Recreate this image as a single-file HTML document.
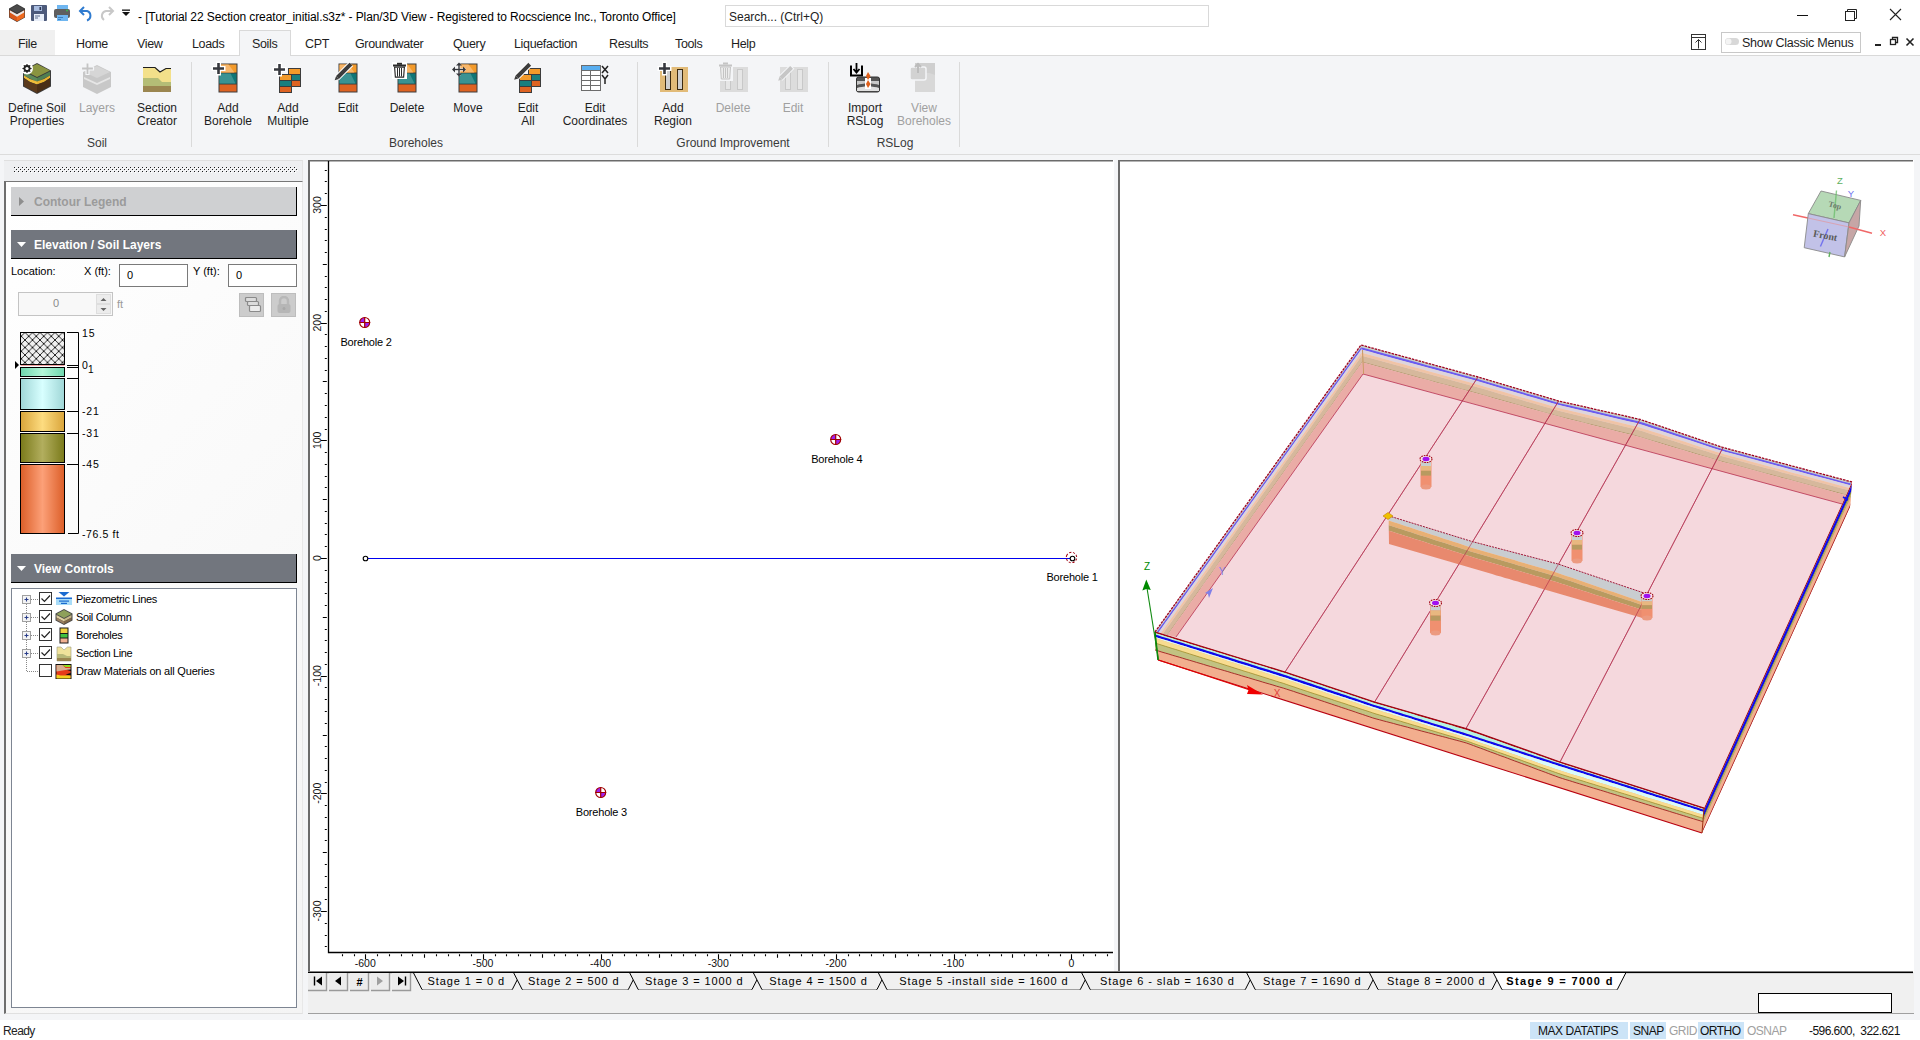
<!DOCTYPE html>
<html><head><meta charset="utf-8">
<style>
*{margin:0;padding:0;box-sizing:border-box}
html,body{width:1920px;height:1040px;overflow:hidden;background:#f4f5f7;font-family:"Liberation Sans",sans-serif;color:#1e1e1e}
.a{position:absolute}
.t{position:absolute;white-space:nowrap;line-height:1}
#title{left:0;top:0;width:1920px;height:30px;background:#fff}
#menu{left:0;top:30px;width:1920px;height:26px;background:#fff;border-bottom:1px solid #d9d9d9}
.mt{position:absolute;top:8px;font-size:12.5px;letter-spacing:-0.35px;color:#1e1e1e;white-space:nowrap;line-height:1}
#ribbon{left:0;top:56px;width:1920px;height:99px;background:#f4f5f7;border-bottom:1px solid #dcdcdc}
.rb{position:absolute;font-size:12px;color:#1e1e1e;text-align:center;line-height:13px;white-space:nowrap}
.rb.dis{color:#a0a0a0}
.gl{position:absolute;top:81px;font-size:12px;color:#3a3a3a;line-height:1;white-space:nowrap}
.sep{position:absolute;top:6px;width:1px;height:86px;background:#dcdcdc}
</style></head><body>

<!-- TITLE BAR -->
<div id="title" class="a">
 <svg class="a" style="left:0;top:0" width="140" height="30">
  <!-- app icon -->
  <path d="M17 4 L25 8.5 L25 17.5 L17 22 L9 17.5 L9 8.5Z" fill="#3a3a3a"/>
  <path d="M9.5 10 L17 14.5 L17 21.5 L9.5 17.2Z" fill="#d9581a"/>
  <path d="M24.5 10 L17 14.5 L17 21.5 L24.5 17.2Z" fill="#ef6a1e"/>
  <path d="M10 10.5 L17 14.2 L24 10.5 L24 12.5 L17 16.8 L10 12.5Z" fill="#e8e8e8"/>
  <path d="M17 5 L24 9 L17 13 L10 9Z" fill="#4a4a4a"/>
  <!-- save -->
  <rect x="31" y="5" width="16" height="16" rx="1" fill="#4d5a7a"/>
  <rect x="34" y="6" width="8" height="5" fill="#a9bde0"/>
  <rect x="39.5" y="7" width="1.6" height="3" fill="#2e3650"/>
  <rect x="34" y="14" width="10" height="7" fill="#e8eef8"/>
  <rect x="35" y="15.5" width="5" height="1" fill="#5a6a8a"/><rect x="35" y="17.5" width="3" height="1" fill="#5a6a8a"/>
  <!-- print -->
  <rect x="57" y="5" width="11" height="4" fill="#6fb6f0"/>
  <rect x="54" y="9" width="16" height="9" rx="2" fill="#5e5e5e"/>
  <circle cx="67" cy="10.5" r="0.9" fill="#35c04a"/>
  <rect x="57" y="15" width="11" height="6" fill="#6fb6f0"/>
  <rect x="58" y="17" width="5" height="1" fill="#3d7fc0"/><rect x="58" y="19" width="3" height="1" fill="#3d7fc0"/>
  <!-- undo -->
  <path d="M84 7 L80 11 L84 15" fill="none" stroke="#2f7bd0" stroke-width="2"/>
  <path d="M80.5 11 H87 A5 5 0 0 1 87 20.5" fill="none" stroke="#2f7bd0" stroke-width="2"/>
  <!-- redo -->
  <path d="M109 7 L113 11 L109 15" fill="none" stroke="#c8c8c8" stroke-width="2"/>
  <path d="M112.5 11 H106 A5 5 0 0 0 104 20" fill="none" stroke="#c8c8c8" stroke-width="2"/>
  <!-- dropdown -->
  <rect x="122" y="9.5" width="8" height="1.3" fill="#111"/>
  <path d="M122 12 H130 L126 16Z" fill="#111"/>
 </svg>
 <div class="t" style="left:138px;top:11px;font-size:12px;letter-spacing:-0.1px;color:#000">- [Tutorial 22 Section creator_initial.s3z* - Plan/3D View - Registered to Rocscience Inc., Toronto Office]</div>
 <div class="a" style="left:725px;top:5px;width:484px;height:22px;border:1px solid #d9d9d9;background:#fff"></div>
 <div class="t" style="left:729px;top:11px;font-size:12px;color:#222">Search... (Ctrl+Q)</div>
 <svg class="a" style="left:1780px;top:0" width="140" height="30">
  <rect x="17" y="15" width="11" height="1" fill="#111"/>
  <rect x="65.5" y="11.5" width="9" height="9" fill="none" stroke="#222" stroke-width="1"/>
  <path d="M67.5 11.5v-2h9v9h-2" fill="none" stroke="#222" stroke-width="1"/>
  <path d="M110 9l11 11M121 9l-11 11" stroke="#222" stroke-width="1.1"/>
 </svg>
</div>

<!-- MENU -->
<div id="menu" class="a">
  <div class="a" style="left:0;top:0;width:55px;height:25px;background:#f0f0f0"></div>
  <div class="a" style="left:239px;top:0;width:52px;height:26px;background:#f4f5f7;border:1px solid #d9d9d9;border-bottom:none"></div>
  <div class="mt" style="left:18px">File</div>
  <div class="mt" style="left:76px">Home</div>
  <div class="mt" style="left:137px">View</div>
  <div class="mt" style="left:192px">Loads</div>
  <div class="mt" style="left:252px">Soils</div>
  <div class="mt" style="left:305px">CPT</div>
  <div class="mt" style="left:355px">Groundwater</div>
  <div class="mt" style="left:453px">Query</div>
  <div class="mt" style="left:514px">Liquefaction</div>
  <div class="mt" style="left:609px">Results</div>
  <div class="mt" style="left:675px">Tools</div>
  <div class="mt" style="left:731px">Help</div>
  <div class="a" style="left:1721px;top:2px;width:140px;height:21px;border:1px solid #c8c8c8;background:#fff"></div>
  <div class="mt" style="left:1742px;top:7px;letter-spacing:-0.25px">Show Classic Menus</div>
  <svg class="a" style="left:1680px;top:0" width="240" height="26">
   <rect x="11.5" y="4.5" width="14" height="15" fill="none" stroke="#333" stroke-width="1"/>
   <path d="M11.5 7.5h14" stroke="#333" stroke-width="1"/>
   <path d="M18.5 18.5v-9M15.5 12.5l3 -3l3 3" fill="none" stroke="#333" stroke-width="1"/>
   <rect x="45" y="8" width="14" height="7" rx="3.5" fill="#d8d8d8"/>
   <circle cx="48.5" cy="11.5" r="3" fill="#f4f4f4"/>
   <rect x="195" y="14" width="6" height="2" fill="#222"/>
   <rect x="210.5" y="9.5" width="5" height="5" fill="none" stroke="#222" stroke-width="1.3"/>
   <path d="M212.5 9.5v-2h5v5h-2" fill="none" stroke="#222" stroke-width="1.3"/>
   <path d="M226.5 8.5l7 7M233.5 8.5l-7 7" stroke="#222" stroke-width="1.6"/>
  </svg>
</div>

<!-- RIBBON -->
<div id="ribbon" class="a">
<svg class="a" style="left:0;top:0" width="1000" height="99" viewBox="0 56 1000 99">
 <defs>
  <g id="col">
   <rect x="0.5" y="0.5" width="19" height="29" fill="#3c3c3c"/>
   <rect x="1.5" y="1.5" width="17" height="8" fill="#f39a2a"/>
   <path d="M1.5 1.5h9l6 8h-15z" fill="#f7b66a"/>
   <rect x="1.5" y="10.5" width="17" height="10" fill="#0f7676"/>
   <path d="M1.5 10.5h11l5 10h-16z" fill="#3b9292"/>
   <rect x="1.5" y="21.5" width="17" height="7" fill="#de6322"/>
  </g>
  <g id="colsm">
   <rect x="0" y="0" width="13" height="19" fill="#3c3c3c"/>
   <rect x="1" y="1" width="11" height="5" fill="#f39a2a"/>
   <rect x="1" y="7" width="11" height="5" fill="#1a7e7e"/>
   <rect x="1" y="13" width="11" height="5" fill="#de6322"/>
  </g>
  <g id="plus">
   <path d="M-2.5 -7h5v4.5h4.5v5h-4.5v4.5h-5v-4.5h-4.5v-5h4.5z" fill="#fff"/>
   <path d="M-1.3 -5.5h2.6v4.2h4.2v2.6h-4.2v4.2h-2.6v-4.2h-4.2v-2.6h4.2z" fill="#36383e"/>
  </g>
 </defs>
 <!-- Define Soil Properties -->
 <g>
  <path d="M23 70.5 L37 63 L51 70.5 L51 86.5 L37 94 L23 86.5Z" fill="#3b3b3b"/>
  <path d="M24 70.5 L37 64 L50 70.5 L37 77Z" fill="#8a9440"/>
  <path d="M24 71.5 L37 78 L37 82 L24 75.5Z" fill="#5d8a5a"/>
  <path d="M50 71.5 L37 78 L37 82 L50 75.5Z" fill="#4f7f52"/>
  <path d="M24 75.5 L30 79 L37 81.5 L37 84.5 L30 82 L24 78Z" fill="#efbe3a"/>
  <path d="M50 75.5 L44 79 L37 81.5 L37 84.5 L44 82 L50 78Z" fill="#e8b430"/>
  <path d="M24 78 L30 82 L37 84.5 L37 93 L24 86Z" fill="#5a3a1c"/>
  <path d="M50 78 L44 82 L37 84.5 L37 93 L50 86Z" fill="#4a2e16"/>
  <circle cx="27" cy="68.5" r="6" fill="#fff"/><path d="M30.12 67.80 L31.57 67.95 L31.57 69.05 L30.12 69.20 L29.70 70.21 L30.62 71.34 L29.84 72.12 L28.71 71.20 L27.70 71.62 L27.55 73.07 L26.45 73.07 L26.30 71.62 L25.29 71.20 L24.16 72.12 L23.38 71.34 L24.30 70.21 L23.88 69.20 L22.43 69.05 L22.43 67.95 L23.88 67.80 L24.30 66.79 L23.38 65.66 L24.16 64.88 L25.29 65.80 L26.30 65.38 L26.45 63.93 L27.55 63.93 L27.70 65.38 L28.71 65.80 L29.84 64.88 L30.62 65.66 L29.70 66.79Z" fill="#222"/><circle cx="27" cy="68.5" r="3.4" fill="#222"/><circle cx="27" cy="68.5" r="1.6" fill="#fff"/>
 </g>
 <!-- Layers (disabled) -->
 <g opacity="1">
  <path d="M83 72 L97 65 L111 72 L111 87 L97 94 L83 87Z" fill="#c8c8c8"/>
  <path d="M84 72 L97 66 L110 72 L97 78Z" fill="#d6d6d6"/>
  <path d="M84 77 L97 83 L97 85 L84 79Z M110 77 L97 83 L97 85 L110 79Z" fill="#e6e6e6"/>
  <path d="M86 63h3v4h4.5v3h-4.5v4.5h-3v-4.5h-4.5v-3h4.5z" fill="#c4c4c4" stroke="#f4f5f7" stroke-width="1.2"/>
 </g>
 <!-- Section Creator -->
 <g>
  <path d="M143 67 L155 67 L160 72 L166 68 L171 68 L171 92 L143 92Z" fill="#f3e08a"/>
  <path d="M143 78 L158 78 L162 82 L171 82 L171 86 L143 86Z" fill="#b4bd76"/>
  <rect x="143" y="86" width="28" height="6" fill="#9b8650"/>
  <path d="M143 67.5 L155 67.5 L160 72 L166 68.5 L171 68.5" fill="none" stroke="#1e1e1e" stroke-width="1.2"/>
 </g>
 <!-- Add Borehole -->
 <use href="#col" x="218" y="63"/>
 <use href="#plus" x="218.5" y="68.5"/>
 <!-- Add Multiple -->
 <use href="#colsm" x="288" y="68"/>
 <use href="#colsm" x="279" y="74"/>
 <use href="#plus" x="279.5" y="69.5"/>
 <!-- Edit -->
 <use href="#col" x="338" y="63"/>
 <g transform="translate(337.5,77.5) rotate(-45)">
  <path d="M-1 -3h20v6h-20z" fill="#fff"/>
  <path d="M0 -2h16v4h-16z M16 -2l3 0l0 4l-3 0z" fill="#3c3c3c"/>
  <path d="M-4 0 L0 -2 L0 2Z" fill="#3c3c3c"/>
 </g>
 <!-- Delete -->
 <use href="#col" x="397" y="63"/>
 <g>
  <rect x="392" y="62" width="15" height="17" fill="#fff"/>
  <rect x="393" y="64.5" width="13" height="2" fill="#2c2c2c"/>
  <rect x="397" y="62.8" width="5" height="2" fill="#2c2c2c"/>
  <path d="M394.6 67.2h9.8l-0.8 10h-8.2z" fill="#fff" stroke="#2c2c2c" stroke-width="1.2"/>
  <path d="M397.5 68v8.5M399.5 68v8.5M401.5 68v8.5" stroke="#2c2c2c" stroke-width="1"/>
 </g>
 <!-- Move -->
 <use href="#col" x="458" y="63"/>
 <g fill="#fff" stroke="#fff" stroke-width="2.5"><path d="M459 63v13M452.5 69.5h13"/></g>
 <g fill="#36383e"><path d="M459 62.5l-3 3h6z M459 76.5l-3 -3h6z M452 69.5l3 -3v6z M466 69.5l-3 -3v6z"/><rect x="458.3" y="64" width="1.4" height="11"/><rect x="453.5" y="68.8" width="11" height="1.4"/></g>
 <!-- Edit All -->
 <use href="#colsm" x="528" y="68"/>
 <use href="#colsm" x="519" y="74"/>
 <g transform="translate(517,77) rotate(-45)">
  <path d="M-1 -3h19v6h-19z" fill="#fff"/>
  <path d="M0 -2h15v4h-15z M15 -2h3v4h-3z" fill="#3c3c3c"/>
  <path d="M-4 0 L0 -2 L0 2Z" fill="#3c3c3c"/>
 </g>
 <!-- Edit Coordinates -->
 <g>
  <rect x="581.5" y="65.5" width="19" height="25" fill="#fff" stroke="#6c6c6c" stroke-width="1"/>
  <rect x="582" y="66" width="18" height="4.5" fill="#58aef0"/>
  <path d="M582 70.5h18M582 75.5h18M582 80.5h18M582 85.5h18M590.5 71v19" stroke="#6c6c6c" stroke-width="1"/>
  <path d="M602 66l6 7M608 66l-6 7M602 75l3 4l3 -4M605 79v5" stroke="#222" stroke-width="1.5" fill="none"/>
 </g>
 <!-- Add Region -->
 <g>
  <rect x="660" y="67" width="28" height="25" fill="#e2bb78"/>
  <rect x="665.5" y="69.5" width="5" height="20" fill="#cfcfcf" stroke="#3c2a10" stroke-width="1"/>
  <rect x="677.5" y="69.5" width="5" height="20" fill="#cfcfcf" stroke="#3c2a10" stroke-width="1"/>
  <use href="#plus" x="664.5" y="68.5"/>
 </g>
 <!-- Delete dis -->
 <g>
  <rect x="720" y="67" width="28" height="25" fill="#dcdcdc"/>
  <rect x="725.5" y="69.5" width="5" height="20" fill="#e6e6e6" stroke="#c8c8c8" stroke-width="1"/>
  <rect x="737.5" y="69.5" width="5" height="20" fill="#e6e6e6" stroke="#c8c8c8" stroke-width="1"/>
  <rect x="718" y="62" width="15" height="19" fill="#f4f5f7"/>
  <rect x="719" y="64.5" width="13" height="2" fill="#c4c4c4"/>
  <rect x="723" y="62.5" width="5" height="2" fill="#c4c4c4"/>
  <path d="M720.5 67h10l-0.8 12h-8.4z" fill="#ececec" stroke="#c4c4c4" stroke-width="1"/>
  <path d="M723.5 68v10M725.5 68v10M727.5 68v10" stroke="#c4c4c4" stroke-width="1"/>
 </g>
 <!-- Edit dis -->
 <g>
  <rect x="780" y="67" width="28" height="25" fill="#dcdcdc"/>
  <rect x="785.5" y="69.5" width="5" height="20" fill="#e6e6e6" stroke="#c8c8c8" stroke-width="1"/>
  <rect x="797.5" y="69.5" width="5" height="20" fill="#e6e6e6" stroke="#c8c8c8" stroke-width="1"/>
  <g transform="translate(781,78) rotate(-45)"><path d="M-1 -3h17v6h-17z" fill="#f4f5f7"/><path d="M0 -2h15v4h-15z" fill="#c6c6c6"/><path d="M-4 0L0 -2L0 2Z" fill="#c6c6c6"/></g>
 </g>
 <!-- Import RSLog -->
 <g>
  <path d="M851 65.5v10h11v-10" fill="none" stroke="#000" stroke-width="2"/>
  <path d="M856.5 63v9M853.5 69l3 3.5l3 -3.5" fill="none" stroke="#000" stroke-width="1.8"/>
  <rect x="856.5" y="77" width="23" height="15" rx="2" fill="#555" stroke="#333"/>
  <path d="M857 81h22v4c-5 -2 -17 -2 -22 0z" fill="#c8c8c8"/>
  <path d="M857 88c5 -2 17 -2 22 0v3h-22z" fill="#e0e0e0"/>
  <rect x="865" y="78" width="6" height="11" fill="#fff"/>
  <path d="M868 72l2.5 4l-2.5 4l2.5 4l-2.5 4l-2 -4l2 -4l-2 -4z" fill="#e0601a"/>
 </g>
 <!-- View Boreholes dis -->
 <g>
  <rect x="915" y="63" width="20" height="29" fill="#d8d8d8"/>
  <path d="M915 63h20v12l-6 -2h-14z" fill="#cfcfcf"/>
  <rect x="910" y="67" width="16" height="13" rx="2" fill="#d2d2d2" stroke="#f4f5f7" stroke-width="1.5"/>
  <path d="M918 63v10M915 67l3 -3l3 3" stroke="#bcbcbc" stroke-width="2" fill="none"/>
 </g>
 <!-- separators -->
 <rect x="191" y="62" width="1" height="85" fill="#dadada"/>
 <rect x="637" y="62" width="1" height="85" fill="#dadada"/>
 <rect x="828" y="62" width="1" height="85" fill="#dadada"/>
 <rect x="959" y="62" width="1" height="85" fill="#dadada"/>
</svg>
 <div class="rb" style="left:37px;top:46px;transform:translateX(-50%)">Define Soil<br>Properties</div>
 <div class="rb dis" style="left:97px;top:46px;transform:translateX(-50%)">Layers</div>
 <div class="rb" style="left:157px;top:46px;transform:translateX(-50%)">Section<br>Creator</div>
 <div class="rb" style="left:228px;top:46px;transform:translateX(-50%)">Add<br>Borehole</div>
 <div class="rb" style="left:288px;top:46px;transform:translateX(-50%)">Add<br>Multiple</div>
 <div class="rb" style="left:348px;top:46px;transform:translateX(-50%)">Edit</div>
 <div class="rb" style="left:407px;top:46px;transform:translateX(-50%)">Delete</div>
 <div class="rb" style="left:468px;top:46px;transform:translateX(-50%)">Move</div>
 <div class="rb" style="left:528px;top:46px;transform:translateX(-50%)">Edit<br>All</div>
 <div class="rb" style="left:595px;top:46px;transform:translateX(-50%)">Edit<br>Coordinates</div>
 <div class="rb" style="left:673px;top:46px;transform:translateX(-50%)">Add<br>Region</div>
 <div class="rb dis" style="left:733px;top:46px;transform:translateX(-50%)">Delete</div>
 <div class="rb dis" style="left:793px;top:46px;transform:translateX(-50%)">Edit</div>
 <div class="rb" style="left:865px;top:46px;transform:translateX(-50%)">Import<br>RSLog</div>
 <div class="rb dis" style="left:924px;top:46px;transform:translateX(-50%)">View<br>Boreholes</div>
 <div class="gl" style="left:97px;transform:translateX(-50%)">Soil</div>
 <div class="gl" style="left:416px;transform:translateX(-50%)">Boreholes</div>
 <div class="gl" style="left:733px;transform:translateX(-50%)">Ground Improvement</div>
 <div class="gl" style="left:895px;transform:translateX(-50%)">RSLog</div>
</div>

<!-- LEFT PANEL -->
<div class="a" style="left:4px;top:160px;width:299px;height:21px;background:#eeeff1;border-top:1px solid #dfdfdf;border-right:1px solid #e4e4e4"></div>
<svg class="a" style="left:14px;top:167px" width="284" height="6">
 <defs><pattern id="dots" width="4" height="4" patternUnits="userSpaceOnUse"><rect x="1" y="1" width="1" height="1" fill="#fff"/><rect x="3" y="3" width="1" height="1" fill="#fff"/><rect x="0" y="0" width="1" height="1" fill="#1e1e1e"/><rect x="2" y="2" width="1" height="1" fill="#1e1e1e"/></pattern></defs>
 <rect x="0" y="0" width="284" height="6" fill="url(#dots)"/>
</svg>
<div class="a" style="left:4px;top:181px;width:299px;height:833px;background:linear-gradient(135deg,#ffffff 0%,#f4f4f4 100%);border-left:2px solid #6e6e6e;border-top:1px solid #777;border-bottom:1px solid #e0e0e0;border-right:1px solid #e8e8e8"></div>
<!-- contour legend header -->
<div class="a" style="left:11px;top:187px;width:286px;height:29px;background:#cfd0d2;border-right:1px solid #000;border-bottom:1px solid #000"></div>
<svg class="a" style="left:19px;top:197px" width="6" height="10"><path d="M0 0L5 4.5L0 9Z" fill="#8e8e8e"/></svg>
<div class="t" style="left:34px;top:196px;font-size:12px;font-weight:bold;color:#9b9b9b">Contour Legend</div>
<!-- elevation header -->
<div class="a" style="left:11px;top:230px;width:286px;height:29px;background:#72767e;border-right:1px solid #000;border-bottom:1px solid #000"></div>
<svg class="a" style="left:17px;top:242px" width="10" height="6"><path d="M0 0H9L4.5 5Z" fill="#fff"/></svg>
<div class="t" style="left:34px;top:239px;font-size:12px;font-weight:bold;color:#fff">Elevation / Soil Layers</div>
<div class="t" style="left:11px;top:266px;font-size:11px;color:#000">Location:</div>
<div class="t" style="left:84px;top:266px;font-size:11px;color:#000">X (ft):</div>
<div class="a" style="left:119px;top:264px;width:69px;height:23px;background:#fff;border:1px solid #7a7a7a"></div>
<div class="t" style="left:127px;top:270px;font-size:11px;color:#000">0</div>
<div class="t" style="left:193px;top:266px;font-size:11px;color:#000">Y (ft):</div>
<div class="a" style="left:228px;top:264px;width:69px;height:23px;background:#fff;border:1px solid #7a7a7a"></div>
<div class="t" style="left:236px;top:270px;font-size:11px;color:#000">0</div>
<div class="a" style="left:18px;top:292px;width:95px;height:24px;background:#f8f8f8;border:1px solid #c4c4c4"></div>
<div class="t" style="left:53px;top:298px;font-size:11px;color:#8a8a8a">0</div>
<div class="a" style="left:96px;top:294px;width:15px;height:10px;background:#ececec;border:1px solid #dedede"></div>
<div class="a" style="left:96px;top:304px;width:15px;height:10px;background:#ececec;border:1px solid #dedede"></div>
<svg class="a" style="left:100px;top:297px" width="8" height="16"><path d="M0.5 4H6.5L3.5 1Z M0.5 11H6.5L3.5 14Z" fill="#666"/></svg>
<div class="t" style="left:117px;top:299px;font-size:11px;color:#9a9a9a">ft</div>
<div class="a" style="left:239px;top:293px;width:25px;height:24px;background:#cccccc;border:1px solid #bdbdbd"></div>
<svg class="a" style="left:242px;top:296px" width="20" height="18">
 <g fill="#dcdcdc" stroke="#8a8a8a" stroke-width="1.2">
  <rect x="3.5" y="1.5" width="11" height="4" rx="1"/><rect x="5.5" y="5.5" width="11" height="4" rx="1"/><rect x="7.5" y="9.5" width="11" height="6" rx="1" fill="#ececec"/>
 </g>
</svg>
<div class="a" style="left:271px;top:293px;width:25px;height:24px;background:#cccccc;border:1px solid #bdbdbd"></div>
<svg class="a" style="left:274px;top:296px" width="20" height="18">
 <path d="M6 8V5a4 4 0 0 1 8 0v3" fill="none" stroke="#b8b8b8" stroke-width="2.5"/>
 <rect x="3.5" y="8" width="13" height="9" rx="2" fill="#b6b6b6"/>
 <circle cx="10" cy="12.5" r="1.5" fill="#a8a8a8"/>
</svg>
<!-- soil column -->
<svg class="a" style="left:10px;top:325px" width="130" height="220">
 <defs>
  <pattern id="hatch" width="7.5" height="7.5" patternUnits="userSpaceOnUse" x="0" y="0">
   <rect width="7.5" height="7.5" fill="#f0f0f0"/>
   <path d="M0 0L7.5 7.5M7.5 0L0 7.5" stroke="#111" stroke-width="0.9"/>
  </pattern>
  <linearGradient id="gGreen" x1="0" x2="1"><stop offset="0" stop-color="#6fd6ae"/><stop offset="0.5" stop-color="#b4f6d8"/><stop offset="1" stop-color="#6fd6ae"/></linearGradient>
  <linearGradient id="gCyan" x1="0" x2="1"><stop offset="0" stop-color="#9fd6d6"/><stop offset="0.5" stop-color="#d8ffff"/><stop offset="1" stop-color="#9fd6d6"/></linearGradient>
  <linearGradient id="gYel" x1="0" x2="1"><stop offset="0" stop-color="#d9a43a"/><stop offset="0.5" stop-color="#fddc80"/><stop offset="1" stop-color="#d9a43a"/></linearGradient>
  <linearGradient id="gOl" x1="0" x2="1"><stop offset="0" stop-color="#7a7a1a"/><stop offset="0.5" stop-color="#b2ae5e"/><stop offset="1" stop-color="#7a7a1a"/></linearGradient>
  <linearGradient id="gOr" x1="0" x2="1"><stop offset="0" stop-color="#dc5e28"/><stop offset="0.5" stop-color="#fca078"/><stop offset="1" stop-color="#dc5e28"/></linearGradient>
 </defs>
 <rect x="10.5" y="7.5" width="44" height="32" fill="url(#hatch)" stroke="#000" stroke-width="1"/>
 <rect x="10.5" y="40" width="44" height="1" fill="#f4a0a0"/>
 <rect x="10.5" y="42.5" width="44" height="9" fill="url(#gGreen)" stroke="#000" stroke-width="1"/>
 <rect x="10.5" y="53.5" width="44" height="31" fill="url(#gCyan)" stroke="#000" stroke-width="1"/>
 <rect x="10.5" y="86.5" width="44" height="20" fill="url(#gYel)" stroke="#000" stroke-width="1"/>
 <rect x="10.5" y="108.5" width="44" height="29" fill="url(#gOl)" stroke="#000" stroke-width="1"/>
 <rect x="10.5" y="139.5" width="44" height="69" fill="url(#gOr)" stroke="#000" stroke-width="1"/>
 <path d="M57 7.5H68.5V208.5H58M57 40.5H68.5M57 42.5H68.5M57 53.5H68.5M57 86.5H68.5M57 108.5H68.5M57 139.5H68.5" fill="none" stroke="#000" stroke-width="1"/>
 <path d="M5 36L9 40L5 44Z" fill="#000"/>
 <g font-family="Liberation Sans" font-size="10.5" fill="#000">
  <text x="72" y="11.5" letter-spacing="0.8">15</text>
  <text x="72" y="44" >0</text><text x="78" y="47.5" font-size="10">1</text>
  <text x="72" y="90" letter-spacing="0.8">-21</text>
  <text x="72" y="112" letter-spacing="0.8">-31</text>
  <text x="72" y="143" letter-spacing="0.8">-45</text>
  <text x="72" y="212.5" letter-spacing="0.6">-76.5 ft</text>
 </g>
</svg>
<!-- view controls -->
<div class="a" style="left:11px;top:554px;width:286px;height:29px;background:#72767e;border-right:1px solid #000;border-bottom:1px solid #000"></div>
<svg class="a" style="left:17px;top:566px" width="10" height="6"><path d="M0 0H9L4.5 5Z" fill="#fff"/></svg>
<div class="t" style="left:34px;top:563px;font-size:12px;font-weight:bold;color:#fff">View Controls</div>
<div class="a" style="left:11px;top:588px;width:286px;height:420px;background:#fff;border:1px solid #7d8592"></div>
<svg class="a" style="left:11px;top:588px" width="286" height="100">
 <g stroke="#888" stroke-width="1" stroke-dasharray="1 1" fill="none">
  <path d="M15.5 16V83.5H28"/>
  <path d="M20 11.5H28M20 29.5H28M20 47.5H28M20 65.5H28"/>
 </g>
 <g>
  <rect x="11.5" y="7.5" width="8" height="8" fill="#f4f4f4" stroke="#a0a0a0"/>
  <rect x="11.5" y="25.5" width="8" height="8" fill="#f4f4f4" stroke="#a0a0a0"/>
  <rect x="11.5" y="43.5" width="8" height="8" fill="#f4f4f4" stroke="#a0a0a0"/>
  <rect x="11.5" y="61.5" width="8" height="8" fill="#f4f4f4" stroke="#a0a0a0"/>
  <path d="M13.5 11.5h4M15.5 9.5v4M13.5 29.5h4M15.5 27.5v4M13.5 47.5h4M15.5 45.5v4M13.5 65.5h4M15.5 63.5v4" stroke="#2a3e8a" stroke-width="1.1"/>
 </g>
 <g fill="#fff" stroke="#333" stroke-width="1">
  <rect x="28.5" y="4.5" width="12" height="12"/><rect x="28.5" y="22.5" width="12" height="12"/><rect x="28.5" y="40.5" width="12" height="12"/><rect x="28.5" y="58.5" width="12" height="12"/><rect x="28.5" y="76.5" width="12" height="12"/>
 </g>
 <g fill="none" stroke="#222" stroke-width="1.2">
  <path d="M30.5 10.5l3 3l5.5 -6M30.5 28.5l3 3l5.5 -6M30.5 46.5l3 3l5.5 -6M30.5 64.5l3 3l5.5 -6"/>
 </g>
 <!-- icons -->
 <rect x="45" y="11" width="16" height="6" fill="#a8dcf8"/>
 <path d="M47.5 4h11l-5.5 4.5z" fill="#1a6ad0"/>
 <rect x="45" y="9.5" width="16" height="1.5" fill="#1a6ad0"/><rect x="48" y="12.5" width="10" height="1.2" fill="#1a6ad0"/><rect x="50" y="14.8" width="6" height="1.2" fill="#1a6ad0"/>
 <path d="M53 21L61.5 25.5V32.5L53 37L44.5 32.5V25.5Z" fill="#4a4a4a"/>
 <path d="M53 22L60.5 26L53 30L45.5 26Z" fill="#8ea05a"/>
 <path d="M45.5 27L53 31V33.5L45.5 29.5Z" fill="#e0d0a0"/><path d="M60.5 27L53 31V33.5L60.5 29.5Z" fill="#c8b888"/>
 <path d="M45.5 29.5L53 33.5V36L45.5 32Z" fill="#9a8060"/><path d="M60.5 29.5L53 33.5V36L60.5 32Z" fill="#806848"/>
 <rect x="48.5" y="39.5" width="9" height="16" fill="#1a1a1a"/>
 <rect x="49.5" y="40.5" width="7" height="4.5" fill="#f0d040"/><rect x="49.5" y="46" width="7" height="3.5" fill="#40c040"/><rect x="49.5" y="50.5" width="7" height="4" fill="#f0b090"/>
 <path d="M46 59L50 59L53 62L56.5 59L60 59L60 73L46 73Z" fill="#f0e29a" stroke="#9a9a80" stroke-width="0.6"/>
 <path d="M46 66L52 66L56 68L60 68L60 73L46 73Z" fill="#b8b878"/><rect x="46" y="70" width="14" height="3" fill="#9b8650"/>
 <rect x="44.5" y="76" width="16" height="15" fill="#111"/>
 <path d="M45.5 77h14v3l-5 1.5l5 1.5v2l-5 1.5l5 1v2.5h-14z" fill="#e63a1a"/>
 <path d="M45.5 77h6l3 3h5v1.5l-5 0.5l-9 1.5z" fill="#d8b090"/>
 <path d="M51.5 77h8v2h-5z" fill="#90e020"/>
 <path d="M45.5 86.5l4 1h10v3h-14z" fill="#f0d020"/>
</svg>
<div class="t" style="left:76px;top:594px;font-size:11px;letter-spacing:-0.35px;color:#000">Piezometric Lines</div>
<div class="t" style="left:76px;top:612px;font-size:11px;letter-spacing:-0.35px;color:#000">Soil Column</div>
<div class="t" style="left:76px;top:630px;font-size:11px;letter-spacing:-0.35px;color:#000">Boreholes</div>
<div class="t" style="left:76px;top:648px;font-size:11px;letter-spacing:-0.35px;color:#000">Section Line</div>
<div class="t" style="left:76px;top:666px;font-size:11px;letter-spacing:-0.2px;color:#000">Draw Materials on all Queries</div>

<!-- PLAN VIEW -->
<svg class="a" style="left:308px;top:160px" width="806" height="812" viewBox="308 160 806 812">
<rect x="308" y="160" width="806" height="812" fill="#fff"/>
<rect x="308" y="160" width="805" height="1.5" fill="#6b6b6b"/>
<rect x="308" y="160" width="2" height="811" fill="#6b6b6b"/>
<path d="M328.5 161V952.5H1113" fill="none" stroke="#000" stroke-width="1.3"/>
<path d="M324.8 946.5H326.8M324.8 935.5H326.8M324.8 923.5H326.8M320.8 911.5H326.8M324.8 899.5H326.8M324.8 887.5H326.8M324.8 876.5H326.8M324.8 864.5H326.8M322.8 852.5H326.8M324.8 840.5H326.8M324.8 829.5H326.8M324.8 817.5H326.8M324.8 805.5H326.8M320.8 793.5H326.8M324.8 782.5H326.8M324.8 770.5H326.8M324.8 758.5H326.8M324.8 746.5H326.8M322.8 735.5H326.8M324.8 723.5H326.8M324.8 711.5H326.8M324.8 699.5H326.8M324.8 687.5H326.8M320.8 676.5H326.8M324.8 664.5H326.8M324.8 652.5H326.8M324.8 640.5H326.8M324.8 629.5H326.8M322.8 617.5H326.8M324.8 605.5H326.8M324.8 593.5H326.8M324.8 582.5H326.8M324.8 570.5H326.8M320.8 558.5H326.8M324.8 546.5H326.8M324.8 534.5H326.8M324.8 523.5H326.8M324.8 511.5H326.8M322.8 499.5H326.8M324.8 487.5H326.8M324.8 476.5H326.8M324.8 464.5H326.8M324.8 452.5H326.8M320.8 440.5H326.8M324.8 429.5H326.8M324.8 417.5H326.8M324.8 405.5H326.8M324.8 393.5H326.8M322.8 381.5H326.8M324.8 370.5H326.8M324.8 358.5H326.8M324.8 346.5H326.8M324.8 334.5H326.8M320.8 323.5H326.8M324.8 311.5H326.8M324.8 299.5H326.8M324.8 287.5H326.8M324.8 276.5H326.8M322.8 264.5H326.8M324.8 252.5H326.8M324.8 240.5H326.8M324.8 229.5H326.8M324.8 217.5H326.8M320.8 205.5H326.8M324.8 193.5H326.8M324.8 181.5H326.8M324.8 170.5H326.8M342.5 954.2V956.2M354.5 954.2V956.2M365.5 954.2V959.2M377.5 954.2V956.2M389.5 954.2V956.2M401.5 954.2V956.2M412.5 954.2V956.2M424.5 954.2V957.7M436.5 954.2V956.2M448.5 954.2V956.2M459.5 954.2V956.2M471.5 954.2V956.2M483.5 954.2V959.2M495.5 954.2V956.2M506.5 954.2V956.2M518.5 954.2V956.2M530.5 954.2V956.2M542.5 954.2V957.7M554.5 954.2V956.2M565.5 954.2V956.2M577.5 954.2V956.2M589.5 954.2V956.2M601.5 954.2V959.2M612.5 954.2V956.2M624.5 954.2V956.2M636.5 954.2V956.2M648.5 954.2V956.2M659.5 954.2V957.7M671.5 954.2V956.2M683.5 954.2V956.2M695.5 954.2V956.2M707.5 954.2V956.2M718.5 954.2V959.2M730.5 954.2V956.2M742.5 954.2V956.2M754.5 954.2V956.2M765.5 954.2V956.2M777.5 954.2V957.7M789.5 954.2V956.2M801.5 954.2V956.2M812.5 954.2V956.2M824.5 954.2V956.2M836.5 954.2V959.2M848.5 954.2V956.2M859.5 954.2V956.2M871.5 954.2V956.2M883.5 954.2V956.2M895.5 954.2V957.7M907.5 954.2V956.2M918.5 954.2V956.2M930.5 954.2V956.2M942.5 954.2V956.2M954.5 954.2V959.2M965.5 954.2V956.2M977.5 954.2V956.2M989.5 954.2V956.2M1001.5 954.2V956.2M1012.5 954.2V957.7M1024.5 954.2V956.2M1036.5 954.2V956.2M1048.5 954.2V956.2M1060.5 954.2V956.2M1071.5 954.2V959.2M1083.5 954.2V956.2M1095.5 954.2V956.2M1107.5 954.2V956.2" stroke="#000" stroke-width="1.1"/>
<g font-family="Liberation Sans" font-size="10.5" fill="#111"><text x="365.3" y="967" text-anchor="middle">-600</text><text x="482.9" y="967" text-anchor="middle">-500</text><text x="600.6" y="967" text-anchor="middle">-400</text><text x="718.3" y="967" text-anchor="middle">-300</text><text x="836.0" y="967" text-anchor="middle">-200</text><text x="953.6" y="967" text-anchor="middle">-100</text><text x="1071.3" y="967" text-anchor="middle">0</text><text x="0" y="0" text-anchor="middle" transform="translate(320.5 205.0) rotate(-90)">300</text><text x="0" y="0" text-anchor="middle" transform="translate(320.5 322.7) rotate(-90)">200</text><text x="0" y="0" text-anchor="middle" transform="translate(320.5 440.3) rotate(-90)">100</text><text x="0" y="0" text-anchor="middle" transform="translate(320.5 558.0) rotate(-90)">0</text><text x="0" y="0" text-anchor="middle" transform="translate(320.5 675.7) rotate(-90)">-100</text><text x="0" y="0" text-anchor="middle" transform="translate(320.5 793.3) rotate(-90)">-200</text><text x="0" y="0" text-anchor="middle" transform="translate(320.5 911.0) rotate(-90)">-300</text></g>
<path d="M367.5 558.5H1070" stroke="#0000f0" stroke-width="1.1"/>
<circle cx="1071.5" cy="557.5" r="5.2" fill="none" stroke="#a00010" stroke-width="1" stroke-dasharray="2.2 1.6" transform="rotate(200 1071.5 557.5)"/>
<circle cx="365.5" cy="558.5" r="2.3" fill="#fff" stroke="#000" stroke-width="1.1"/>
<circle cx="1072.5" cy="558.5" r="2.3" fill="#fff" stroke="#000" stroke-width="1.1"/>
<g transform="translate(364.7 322.5)"><path d="M0 0V-5A5 5 0 0 0 -5 0Z M0 0V5A5 5 0 0 0 5 0Z" fill="#a020f0"/><circle r="5" fill="none" stroke="#a00000" stroke-width="1.15"/><path d="M-5.5 0H5.5M0 -5.5V5.5" stroke="#a00000" stroke-width="1.2"/></g>
<g transform="translate(835.7 439.5)"><path d="M0 0V-5A5 5 0 0 0 -5 0Z M0 0V5A5 5 0 0 0 5 0Z" fill="#a020f0"/><circle r="5" fill="none" stroke="#a00000" stroke-width="1.15"/><path d="M-5.5 0H5.5M0 -5.5V5.5" stroke="#a00000" stroke-width="1.2"/></g>
<g transform="translate(600.7 792.5)"><path d="M0 0V-5A5 5 0 0 0 -5 0Z M0 0V5A5 5 0 0 0 5 0Z" fill="#a020f0"/><circle r="5" fill="none" stroke="#a00000" stroke-width="1.15"/><path d="M-5.5 0H5.5M0 -5.5V5.5" stroke="#a00000" stroke-width="1.2"/></g>
<g font-family="Liberation Sans" font-size="11" letter-spacing="-0.2" fill="#000"><text x="366.1" y="345.7" text-anchor="middle">Borehole 2</text><text x="836.8" y="463.3" text-anchor="middle">Borehole 4</text><text x="601.4" y="816.3" text-anchor="middle">Borehole 3</text><text x="1072.1" y="581.0" text-anchor="middle">Borehole 1</text></g>
</svg>
<!-- /PLAN VIEW -->
<!-- 3D VIEW -->
<svg class="a" style="left:1118px;top:160px" width="796" height="812" viewBox="1118 160 796 812">
<rect x="1118" y="160" width="796" height="812" fill="#fff"/>
<rect x="1118" y="160" width="795" height="1.5" fill="#6b6b6b"/>
<rect x="1118" y="160" width="2" height="811" fill="#6b6b6b"/>
<polygon points="1361.0,345.0 1478.0,377.0 1558.6,401.0 1640.0,419.4 1723.0,447.5 1852.0,482.0 1704.0,808.0 1155.0,632.0" fill="#f5d8dd"/>
<polygon points="1361.0,345.0 1369.3,347.3 1377.7,349.6 1386.0,351.8 1394.4,354.1 1402.7,356.4 1411.0,358.7 1419.4,361.0 1427.7,363.2 1436.0,365.5 1444.4,367.8 1452.7,370.1 1461.1,372.4 1469.4,374.6 1477.7,376.9 1486.0,379.4 1494.3,381.9 1502.6,384.3 1510.9,386.8 1519.2,389.3 1527.4,391.7 1535.7,394.2 1544.0,396.7 1552.3,399.1 1560.6,401.5 1569.0,403.4 1577.5,405.3 1585.9,407.2 1594.3,409.1 1602.8,411.0 1611.2,412.9 1619.6,414.8 1628.1,416.7 1636.5,418.6 1644.8,421.0 1653.0,423.8 1661.2,426.6 1669.4,429.3 1677.5,432.1 1685.7,434.9 1693.9,437.7 1702.1,440.4 1710.3,443.2 1718.5,446.0 1726.7,448.5 1735.1,450.7 1743.4,453.0 1751.8,455.2 1760.1,457.4 1768.5,459.7 1776.8,461.9 1785.2,464.1 1793.5,466.4 1801.9,468.6 1810.2,470.8 1818.6,473.1 1826.9,475.3 1835.3,477.5 1843.6,479.8 1852.0,482.0 1851.2,483.8 1842.9,481.5 1834.5,479.3 1826.2,477.1 1817.9,474.8 1809.5,472.6 1801.2,470.4 1792.9,468.1 1784.5,465.9 1776.2,463.7 1767.9,461.5 1759.5,459.2 1751.2,457.0 1742.9,454.8 1734.5,452.5 1726.2,450.3 1718.0,447.8 1709.8,445.1 1701.6,442.3 1693.4,439.6 1685.2,436.9 1677.1,434.2 1668.9,431.4 1660.7,428.7 1652.5,426.0 1644.3,423.3 1636.1,420.9 1627.6,418.9 1619.2,417.0 1610.8,415.1 1602.4,413.1 1594.0,411.2 1585.6,409.3 1577.2,407.3 1568.8,405.4 1560.4,403.5 1552.1,401.2 1543.8,398.7 1535.5,396.3 1527.3,393.8 1519.0,391.4 1510.7,388.9 1502.5,386.5 1494.2,384.0 1485.9,381.6 1477.6,379.2 1469.3,376.9 1461.0,374.6 1452.7,372.3 1444.4,370.1 1436.0,367.8 1427.7,365.5 1419.4,363.2 1411.1,361.0 1402.8,358.7 1394.4,356.4 1386.1,354.1 1377.8,351.9 1369.5,349.6 1361.2,347.3" fill="#c6d0c8"/>
<polygon points="1361.2,347.2 1369.5,349.4 1377.8,351.7 1386.1,354.0 1394.4,356.3 1402.8,358.5 1411.1,360.8 1419.4,363.1 1427.7,365.4 1436.0,367.6 1444.4,369.9 1452.7,372.2 1461.0,374.5 1469.3,376.7 1477.7,379.0 1485.9,381.5 1494.2,383.9 1502.5,386.4 1510.7,388.8 1519.0,391.3 1527.3,393.7 1535.6,396.1 1543.8,398.6 1552.1,401.0 1560.4,403.4 1568.8,405.3 1577.2,407.2 1585.6,409.1 1594.0,411.1 1602.4,413.0 1610.9,414.9 1619.3,416.9 1627.7,418.8 1636.1,420.7 1644.4,423.1 1652.5,425.8 1660.7,428.6 1668.9,431.3 1677.1,434.0 1685.3,436.8 1693.5,439.5 1701.6,442.2 1709.8,444.9 1718.0,447.7 1726.2,450.2 1734.6,452.4 1742.9,454.6 1751.2,456.9 1759.6,459.1 1767.9,461.3 1776.2,463.6 1784.6,465.8 1792.9,468.0 1801.2,470.3 1809.6,472.5 1817.9,474.7 1826.2,477.0 1834.6,479.2 1842.9,481.4 1851.2,483.6 1850.4,485.5 1842.1,483.3 1833.8,481.1 1825.5,478.8 1817.1,476.6 1808.8,474.4 1800.5,472.1 1792.2,469.9 1783.9,467.7 1775.6,465.5 1767.3,463.2 1759.0,461.0 1750.6,458.8 1742.3,456.5 1734.0,454.3 1725.7,452.1 1717.5,449.6 1709.3,446.9 1701.1,444.3 1692.9,441.6 1684.8,438.9 1676.6,436.2 1668.4,433.5 1660.2,430.8 1652.0,428.2 1643.9,425.5 1635.6,423.1 1627.2,421.2 1618.8,419.2 1610.5,417.2 1602.1,415.3 1593.7,413.3 1585.3,411.4 1576.9,409.4 1568.6,407.5 1560.2,405.5 1551.9,403.2 1543.6,400.8 1535.4,398.4 1527.1,395.9 1518.9,393.5 1510.6,391.1 1502.3,388.7 1494.1,386.2 1485.8,383.8 1477.6,381.4 1469.3,379.1 1461.0,376.9 1452.7,374.6 1444.3,372.3 1436.0,370.1 1427.7,367.8 1419.4,365.5 1411.1,363.2 1402.8,361.0 1394.5,358.7 1386.2,356.4 1377.9,354.2 1369.6,351.9 1361.3,349.6" fill="#6a5cf0"/>
<polygon points="1361.3,349.4 1369.6,351.6 1377.9,353.9 1386.2,356.2 1394.5,358.4 1402.8,360.7 1411.1,363.0 1419.4,365.2 1427.7,367.5 1436.0,369.8 1444.4,372.0 1452.7,374.3 1461.0,376.6 1469.3,378.8 1477.6,381.1 1485.8,383.5 1494.1,386.0 1502.4,388.4 1510.6,390.8 1518.9,393.2 1527.1,395.7 1535.4,398.1 1543.7,400.5 1551.9,403.0 1560.2,405.3 1568.6,407.2 1577.0,409.2 1585.4,411.1 1593.7,413.1 1602.1,415.0 1610.5,417.0 1618.9,418.9 1627.3,420.9 1635.7,422.8 1643.9,425.2 1652.1,427.9 1660.3,430.6 1668.5,433.3 1676.6,436.0 1684.8,438.6 1693.0,441.3 1701.2,444.0 1709.3,446.7 1717.5,449.4 1725.8,451.9 1734.1,454.1 1742.4,456.3 1750.7,458.6 1759.0,460.8 1767.3,463.0 1775.7,465.2 1784.0,467.5 1792.3,469.7 1800.6,471.9 1808.9,474.2 1817.2,476.4 1825.6,478.6 1833.9,480.8 1842.2,483.1 1850.5,485.3 1849.3,487.9 1841.0,485.7 1832.7,483.5 1824.4,481.3 1816.1,479.0 1807.9,476.8 1799.6,474.6 1791.3,472.4 1783.0,470.1 1774.7,467.9 1766.4,465.7 1758.1,463.5 1749.8,461.2 1741.6,459.0 1733.3,456.8 1725.0,454.6 1716.8,452.1 1708.6,449.5 1700.4,446.9 1692.2,444.3 1684.1,441.6 1675.9,439.0 1667.7,436.4 1659.6,433.8 1651.4,431.2 1643.2,428.6 1635.0,426.2 1626.6,424.2 1618.3,422.2 1610.0,420.2 1601.6,418.3 1593.3,416.3 1584.9,414.3 1576.6,412.3 1568.2,410.3 1559.9,408.3 1551.6,406.0 1543.4,403.6 1535.1,401.2 1526.9,398.8 1518.6,396.4 1510.4,394.0 1502.2,391.6 1493.9,389.3 1485.7,386.9 1477.4,384.5 1469.2,382.2 1460.9,379.9 1452.6,377.7 1444.3,375.4 1436.0,373.2 1427.8,370.9 1419.5,368.6 1411.2,366.4 1402.9,364.1 1394.7,361.9 1386.4,359.6 1378.1,357.3 1369.8,355.1 1361.5,352.8" fill="#dcd4dc"/>
<polygon points="1361.5,352.8 1369.8,355.1 1378.1,357.3 1386.4,359.6 1394.7,361.9 1402.9,364.1 1411.2,366.4 1419.5,368.6 1427.8,370.9 1436.0,373.2 1444.3,375.4 1452.6,377.7 1460.9,379.9 1469.2,382.2 1477.4,384.5 1485.7,386.9 1493.9,389.3 1502.2,391.6 1510.4,394.0 1518.6,396.4 1526.9,398.8 1535.1,401.2 1543.4,403.6 1551.6,406.0 1559.9,408.3 1568.2,410.3 1576.6,412.3 1584.9,414.3 1593.3,416.3 1601.6,418.3 1610.0,420.2 1618.3,422.2 1626.6,424.2 1635.0,426.2 1643.2,428.6 1651.4,431.2 1659.6,433.8 1667.7,436.4 1675.9,439.0 1684.1,441.6 1692.2,444.3 1700.4,446.9 1708.6,449.5 1716.8,452.1 1725.0,454.6 1733.3,456.8 1741.6,459.0 1749.8,461.2 1758.1,463.5 1766.4,465.7 1774.7,467.9 1783.0,470.1 1791.3,472.4 1799.6,474.6 1807.9,476.8 1816.1,479.0 1824.4,481.3 1832.7,483.5 1841.0,485.7 1849.3,487.9 1848.3,490.1 1840.0,487.9 1831.8,485.7 1823.5,483.5 1815.2,481.3 1807.0,479.0 1798.7,476.8 1790.4,474.6 1782.2,472.4 1773.9,470.1 1765.7,467.9 1757.4,465.7 1749.1,463.5 1740.9,461.3 1732.6,459.0 1724.3,456.8 1716.1,454.4 1708.0,451.8 1699.8,449.3 1691.6,446.7 1683.5,444.2 1675.3,441.6 1667.1,439.0 1659.0,436.5 1650.8,433.9 1642.7,431.3 1634.4,429.0 1626.1,427.0 1617.8,425.0 1609.5,423.0 1601.2,420.9 1592.9,418.9 1584.5,416.9 1576.2,414.9 1567.9,412.9 1559.6,410.9 1551.3,408.6 1543.1,406.2 1534.9,403.8 1526.7,401.5 1518.5,399.1 1510.2,396.7 1502.0,394.4 1493.8,392.0 1485.6,389.6 1477.3,387.3 1469.1,385.0 1460.8,382.8 1452.6,380.5 1444.3,378.2 1436.1,376.0 1427.8,373.7 1419.5,371.5 1411.3,369.2 1403.0,367.0 1394.8,364.7 1386.5,362.5 1378.3,360.2 1370.0,358.0 1361.7,355.7" fill="#f0c4a6"/>
<polygon points="1361.7,355.7 1370.0,358.0 1378.3,360.2 1386.5,362.5 1394.8,364.7 1403.0,367.0 1411.3,369.2 1419.5,371.5 1427.8,373.7 1436.1,376.0 1444.3,378.2 1452.6,380.5 1460.8,382.8 1469.1,385.0 1477.3,387.3 1485.6,389.6 1493.8,392.0 1502.0,394.4 1510.2,396.7 1518.5,399.1 1526.7,401.5 1534.9,403.8 1543.1,406.2 1551.3,408.6 1559.6,410.9 1567.9,412.9 1576.2,414.9 1584.5,416.9 1592.9,418.9 1601.2,420.9 1609.5,423.0 1617.8,425.0 1626.1,427.0 1634.4,429.0 1642.7,431.3 1650.8,433.9 1659.0,436.5 1667.1,439.0 1675.3,441.6 1683.5,444.2 1691.6,446.7 1699.8,449.3 1708.0,451.8 1716.1,454.4 1724.3,456.8 1732.6,459.0 1740.9,461.3 1749.1,463.5 1757.4,465.7 1765.7,467.9 1773.9,470.1 1782.2,472.4 1790.4,474.6 1798.7,476.8 1807.0,479.0 1815.2,481.3 1823.5,483.5 1831.8,485.7 1840.0,487.9 1848.3,490.1 1846.3,494.5 1838.1,492.3 1829.9,490.1 1821.6,487.9 1813.4,485.7 1805.2,483.5 1797.0,481.2 1788.8,479.0 1780.6,476.8 1772.3,474.6 1764.1,472.4 1755.9,470.2 1747.7,467.9 1739.5,465.7 1731.2,463.5 1723.0,461.3 1714.8,459.0 1706.7,456.5 1698.5,454.1 1690.4,451.6 1682.3,449.2 1674.1,446.7 1666.0,444.3 1657.8,441.8 1649.7,439.4 1641.5,436.9 1633.3,434.6 1625.1,432.6 1616.8,430.5 1608.6,428.4 1600.3,426.3 1592.1,424.3 1583.8,422.2 1575.5,420.1 1567.3,418.0 1559.0,415.9 1550.8,413.7 1542.6,411.4 1534.5,409.1 1526.3,406.7 1518.1,404.4 1509.9,402.1 1501.7,399.8 1493.5,397.5 1485.3,395.2 1477.1,392.8 1468.9,390.6 1460.7,388.4 1452.5,386.1 1444.3,383.9 1436.1,381.7 1427.8,379.4 1419.6,377.2 1411.4,374.9 1403.2,372.7 1395.0,370.5 1386.8,368.2 1378.6,366.0 1370.4,363.8 1362.1,361.5" fill="#d6b89c"/>
<polygon points="1362.1,361.5 1370.4,363.8 1378.6,366.0 1386.8,368.2 1395.0,370.5 1403.2,372.7 1411.4,374.9 1419.6,377.2 1427.8,379.4 1436.1,381.7 1444.3,383.9 1452.5,386.1 1460.7,388.4 1468.9,390.6 1477.1,392.8 1485.3,395.2 1493.5,397.5 1501.7,399.8 1509.9,402.1 1518.1,404.4 1526.3,406.7 1534.5,409.1 1542.6,411.4 1550.8,413.7 1559.0,415.9 1567.3,418.0 1575.5,420.1 1583.8,422.2 1592.1,424.3 1600.3,426.3 1608.6,428.4 1616.8,430.5 1625.1,432.6 1633.3,434.6 1641.5,436.9 1649.7,439.4 1657.8,441.8 1666.0,444.3 1674.1,446.7 1682.3,449.2 1690.4,451.6 1698.5,454.1 1706.7,456.5 1714.8,459.0 1723.0,461.3 1731.2,463.5 1739.5,465.7 1747.7,467.9 1755.9,470.2 1764.1,472.4 1772.3,474.6 1780.6,476.8 1788.8,479.0 1797.0,481.2 1805.2,483.5 1813.4,485.7 1821.6,487.9 1829.9,490.1 1838.1,492.3 1846.3,494.5 1846.0,495.1 1837.8,492.9 1829.6,490.7 1821.4,488.4 1813.2,486.2 1805.0,484.0 1796.8,481.8 1788.6,479.6 1780.3,477.4 1772.1,475.2 1763.9,472.9 1755.7,470.7 1747.5,468.5 1739.3,466.3 1731.1,464.1 1722.9,461.9 1714.7,459.5 1706.5,457.1 1698.4,454.7 1690.2,452.2 1682.1,449.8 1674.0,447.4 1665.8,444.9 1657.7,442.5 1649.5,440.1 1641.4,437.6 1633.2,435.3 1624.9,433.2 1616.7,431.2 1608.4,429.1 1600.2,427.0 1592.0,424.9 1583.7,422.8 1575.5,420.7 1567.2,418.7 1559.0,416.6 1550.8,414.3 1542.6,412.0 1534.4,409.7 1526.2,407.4 1518.0,405.1 1509.8,402.8 1501.7,400.5 1493.5,398.2 1485.3,395.8 1477.1,393.5 1468.9,391.3 1460.7,389.1 1452.5,386.8 1444.3,384.6 1436.1,382.4 1427.8,380.1 1419.6,377.9 1411.4,375.7 1403.2,373.4 1395.0,371.2 1386.8,369.0 1378.6,366.7 1370.4,364.5 1362.2,362.3" fill="#a8905a"/>
<polygon points="1362.2,362.3 1370.4,364.5 1378.6,366.7 1386.8,369.0 1395.0,371.2 1403.2,373.4 1411.4,375.7 1419.6,377.9 1427.8,380.1 1436.1,382.4 1444.3,384.6 1452.5,386.8 1460.7,389.1 1468.9,391.3 1477.1,393.5 1485.3,395.8 1493.5,398.2 1501.7,400.5 1509.8,402.8 1518.0,405.1 1526.2,407.4 1534.4,409.7 1542.6,412.0 1550.8,414.3 1559.0,416.6 1567.2,418.7 1575.5,420.7 1583.7,422.8 1592.0,424.9 1600.2,427.0 1608.4,429.1 1616.7,431.2 1624.9,433.2 1633.2,435.3 1641.4,437.6 1649.5,440.1 1657.7,442.5 1665.8,444.9 1674.0,447.4 1682.1,449.8 1690.2,452.2 1698.4,454.7 1706.5,457.1 1714.7,459.5 1722.9,461.9 1731.1,464.1 1739.3,466.3 1747.5,468.5 1755.7,470.7 1763.9,472.9 1772.1,475.2 1780.3,477.4 1788.6,479.6 1796.8,481.8 1805.0,484.0 1813.2,486.2 1821.4,488.4 1829.6,490.7 1837.8,492.9 1846.0,495.1 1842.0,504.0 1833.9,501.8 1825.8,499.6 1817.6,497.4 1809.5,495.2 1801.4,493.0 1793.3,490.8 1785.2,488.6 1777.1,486.4 1768.9,484.2 1760.8,482.0 1752.7,479.8 1744.6,477.6 1736.5,475.4 1728.3,473.2 1720.2,470.9 1712.1,468.7 1704.0,466.5 1695.9,464.3 1687.7,462.1 1679.6,459.9 1671.5,457.7 1663.4,455.5 1655.3,453.3 1647.2,451.1 1639.0,448.9 1630.9,446.7 1622.8,444.5 1614.7,442.3 1606.6,440.1 1598.4,437.9 1590.3,435.7 1582.2,433.5 1574.1,431.3 1566.0,429.1 1557.8,426.9 1549.7,424.7 1541.6,422.5 1533.5,420.3 1525.4,418.1 1517.3,415.9 1509.1,413.7 1501.0,411.5 1492.9,409.3 1484.8,407.1 1476.7,404.8 1468.5,402.6 1460.4,400.4 1452.3,398.2 1444.2,396.0 1436.1,393.8 1427.9,391.6 1419.8,389.4 1411.7,387.2 1403.6,385.0 1395.5,382.8 1387.4,380.6 1379.2,378.4 1371.1,376.2 1363.0,374.0" fill="#eaaca6"/>
<polygon points="1361.0,345.0 1357.5,349.9 1354.0,354.7 1350.5,359.6 1347.0,364.5 1343.5,369.3 1340.1,374.2 1336.6,379.1 1333.1,383.9 1329.6,388.8 1326.1,393.6 1322.6,398.5 1319.1,403.4 1315.6,408.2 1312.1,413.1 1308.6,418.0 1305.1,422.8 1301.6,427.7 1298.2,432.6 1294.7,437.4 1291.2,442.3 1287.7,447.2 1284.2,452.0 1280.7,456.9 1277.2,461.7 1273.7,466.6 1270.2,471.5 1266.7,476.3 1263.2,481.2 1259.7,486.1 1256.3,490.9 1252.8,495.8 1249.3,500.7 1245.8,505.5 1242.3,510.4 1238.8,515.3 1235.3,520.1 1231.8,525.0 1228.3,529.8 1224.8,534.7 1221.3,539.6 1217.8,544.4 1214.4,549.3 1210.9,554.2 1207.4,559.0 1203.9,563.9 1200.4,568.8 1196.9,573.6 1193.4,578.5 1189.9,583.4 1186.4,588.2 1182.9,593.1 1179.4,597.9 1175.9,602.8 1172.5,607.7 1169.0,612.5 1165.5,617.4 1162.0,622.3 1158.5,627.1 1155.0,632.0 1156.7,632.4 1160.1,627.6 1163.6,622.7 1167.1,617.9 1170.5,613.1 1174.0,608.2 1177.5,603.4 1180.9,598.6 1184.4,593.7 1187.9,588.9 1191.3,584.1 1194.8,579.2 1198.3,574.4 1201.7,569.6 1205.2,564.8 1208.7,559.9 1212.1,555.1 1215.6,550.3 1219.1,545.4 1222.5,540.6 1226.0,535.8 1229.5,530.9 1232.9,526.1 1236.4,521.3 1239.9,516.4 1243.3,511.6 1246.8,506.8 1250.3,501.9 1253.7,497.1 1257.2,492.3 1260.7,487.4 1264.1,482.6 1267.6,477.8 1271.1,472.9 1274.5,468.1 1278.0,463.3 1281.4,458.5 1284.9,453.6 1288.4,448.8 1291.8,444.0 1295.3,439.1 1298.8,434.3 1302.2,429.5 1305.7,424.6 1309.2,419.8 1312.6,415.0 1316.1,410.1 1319.6,405.3 1323.0,400.5 1326.5,395.6 1330.0,390.8 1333.4,386.0 1336.9,381.1 1340.4,376.3 1343.8,371.5 1347.3,366.6 1350.8,361.8 1354.2,357.0 1357.7,352.2 1361.2,347.3" fill="#c6d0c8"/>
<polygon points="1361.2,347.2 1357.7,352.0 1354.2,356.8 1350.7,361.7 1347.3,366.5 1343.8,371.3 1340.3,376.2 1336.9,381.0 1333.4,385.8 1329.9,390.7 1326.5,395.5 1323.0,400.3 1319.5,405.2 1316.1,410.0 1312.6,414.8 1309.1,419.7 1305.7,424.5 1302.2,429.4 1298.7,434.2 1295.3,439.0 1291.8,443.9 1288.3,448.7 1284.9,453.5 1281.4,458.4 1277.9,463.2 1274.5,468.0 1271.0,472.9 1267.5,477.7 1264.1,482.5 1260.6,487.4 1257.1,492.2 1253.7,497.0 1250.2,501.9 1246.7,506.7 1243.3,511.5 1239.8,516.4 1236.3,521.2 1232.9,526.0 1229.4,530.9 1225.9,535.7 1222.5,540.5 1219.0,545.4 1215.5,550.2 1212.1,555.0 1208.6,559.9 1205.1,564.7 1201.7,569.5 1198.2,574.4 1194.7,579.2 1191.2,584.0 1187.8,588.9 1184.3,593.7 1180.8,598.5 1177.4,603.4 1173.9,608.2 1170.4,613.0 1167.0,617.9 1163.5,622.7 1160.0,627.5 1156.6,632.4 1158.4,632.8 1161.8,628.0 1165.2,623.2 1168.7,618.4 1172.1,613.6 1175.6,608.8 1179.0,604.0 1182.4,599.2 1185.9,594.4 1189.3,589.6 1192.8,584.8 1196.2,580.0 1199.6,575.2 1203.1,570.4 1206.5,565.6 1210.0,560.8 1213.4,556.0 1216.8,551.2 1220.3,546.4 1223.7,541.6 1227.2,536.8 1230.6,532.0 1234.0,527.2 1237.5,522.4 1240.9,517.6 1244.4,512.8 1247.8,508.0 1251.2,503.2 1254.7,498.4 1258.1,493.6 1261.6,488.8 1265.0,484.0 1268.4,479.2 1271.9,474.4 1275.3,469.6 1278.8,464.8 1282.2,460.0 1285.6,455.2 1289.1,450.4 1292.5,445.6 1296.0,440.8 1299.4,436.0 1302.8,431.2 1306.3,426.4 1309.7,421.6 1313.2,416.8 1316.6,412.0 1320.0,407.2 1323.5,402.4 1326.9,397.6 1330.4,392.8 1333.8,388.0 1337.2,383.2 1340.7,378.4 1344.1,373.6 1347.6,368.8 1351.0,364.0 1354.4,359.2 1357.9,354.4 1361.3,349.6" fill="#6a5cf0"/>
<polygon points="1361.3,349.4 1357.9,354.2 1354.4,359.0 1351.0,363.8 1347.5,368.6 1344.1,373.4 1340.6,378.2 1337.2,383.0 1333.8,387.8 1330.3,392.6 1326.9,397.4 1323.4,402.2 1320.0,407.0 1316.5,411.8 1313.1,416.6 1309.7,421.4 1306.2,426.2 1302.8,431.0 1299.3,435.8 1295.9,440.6 1292.4,445.4 1289.0,450.2 1285.5,455.0 1282.1,459.8 1278.7,464.6 1275.2,469.4 1271.8,474.2 1268.3,479.0 1264.9,483.8 1261.4,488.6 1258.0,493.5 1254.6,498.3 1251.1,503.1 1247.7,507.9 1244.2,512.7 1240.8,517.5 1237.3,522.3 1233.9,527.1 1230.5,531.9 1227.0,536.7 1223.6,541.5 1220.1,546.3 1216.7,551.1 1213.2,555.9 1209.8,560.7 1206.4,565.5 1202.9,570.3 1199.5,575.1 1196.0,579.9 1192.6,584.7 1189.1,589.5 1185.7,594.3 1182.3,599.1 1178.8,603.9 1175.4,608.7 1171.9,613.5 1168.5,618.3 1165.0,623.1 1161.6,627.9 1158.2,632.8 1160.7,633.4 1164.1,628.6 1167.5,623.8 1170.9,619.1 1174.3,614.3 1177.7,609.6 1181.1,604.8 1184.5,600.1 1187.9,595.3 1191.3,590.6 1194.7,585.8 1198.1,581.0 1201.5,576.3 1204.9,571.5 1208.3,566.8 1211.7,562.0 1215.1,557.3 1218.5,552.5 1222.0,547.8 1225.4,543.0 1228.8,538.3 1232.2,533.5 1235.6,528.7 1239.0,524.0 1242.4,519.2 1245.8,514.5 1249.2,509.7 1252.6,505.0 1256.0,500.2 1259.4,495.5 1262.8,490.7 1266.2,486.0 1269.6,481.2 1273.0,476.4 1276.4,471.7 1279.8,466.9 1283.2,462.2 1286.6,457.4 1290.0,452.7 1293.4,447.9 1296.9,443.2 1300.3,438.4 1303.7,433.7 1307.1,428.9 1310.5,424.1 1313.9,419.4 1317.3,414.6 1320.7,409.9 1324.1,405.1 1327.5,400.4 1330.9,395.6 1334.3,390.9 1337.7,386.1 1341.1,381.4 1344.5,376.6 1347.9,371.8 1351.3,367.1 1354.7,362.3 1358.1,357.6 1361.5,352.8" fill="#dcd4dc"/>
<polygon points="1361.5,352.8 1358.1,357.6 1354.7,362.3 1351.3,367.1 1347.9,371.8 1344.5,376.6 1341.1,381.4 1337.7,386.1 1334.3,390.9 1330.9,395.6 1327.5,400.4 1324.1,405.1 1320.7,409.9 1317.3,414.6 1313.9,419.4 1310.5,424.1 1307.1,428.9 1303.7,433.7 1300.3,438.4 1296.9,443.2 1293.4,447.9 1290.0,452.7 1286.6,457.4 1283.2,462.2 1279.8,466.9 1276.4,471.7 1273.0,476.4 1269.6,481.2 1266.2,486.0 1262.8,490.7 1259.4,495.5 1256.0,500.2 1252.6,505.0 1249.2,509.7 1245.8,514.5 1242.4,519.2 1239.0,524.0 1235.6,528.7 1232.2,533.5 1228.8,538.3 1225.4,543.0 1222.0,547.8 1218.5,552.5 1215.1,557.3 1211.7,562.0 1208.3,566.8 1204.9,571.5 1201.5,576.3 1198.1,581.0 1194.7,585.8 1191.3,590.6 1187.9,595.3 1184.5,600.1 1181.1,604.8 1177.7,609.6 1174.3,614.3 1170.9,619.1 1167.5,623.8 1164.1,628.6 1160.7,633.4 1162.8,633.9 1166.1,629.1 1169.5,624.4 1172.9,619.7 1176.3,615.0 1179.6,610.3 1183.0,605.6 1186.4,600.9 1189.7,596.1 1193.1,591.4 1196.5,586.7 1199.9,582.0 1203.2,577.3 1206.6,572.6 1210.0,567.9 1213.4,563.1 1216.7,558.4 1220.1,553.7 1223.5,549.0 1226.8,544.3 1230.2,539.6 1233.6,534.9 1237.0,530.1 1240.3,525.4 1243.7,520.7 1247.1,516.0 1250.5,511.3 1253.8,506.6 1257.2,501.9 1260.6,497.1 1263.9,492.4 1267.3,487.7 1270.7,483.0 1274.1,478.3 1277.4,473.6 1280.8,468.9 1284.2,464.1 1287.5,459.4 1290.9,454.7 1294.3,450.0 1297.7,445.3 1301.0,440.6 1304.4,435.9 1307.8,431.2 1311.2,426.4 1314.5,421.7 1317.9,417.0 1321.3,412.3 1324.6,407.6 1328.0,402.9 1331.4,398.2 1334.8,393.4 1338.1,388.7 1341.5,384.0 1344.9,379.3 1348.3,374.6 1351.6,369.9 1355.0,365.2 1358.4,360.4 1361.7,355.7" fill="#f0c4a6"/>
<polygon points="1361.7,355.7 1358.4,360.4 1355.0,365.2 1351.6,369.9 1348.3,374.6 1344.9,379.3 1341.5,384.0 1338.1,388.7 1334.8,393.4 1331.4,398.2 1328.0,402.9 1324.6,407.6 1321.3,412.3 1317.9,417.0 1314.5,421.7 1311.2,426.4 1307.8,431.2 1304.4,435.9 1301.0,440.6 1297.7,445.3 1294.3,450.0 1290.9,454.7 1287.5,459.4 1284.2,464.1 1280.8,468.9 1277.4,473.6 1274.1,478.3 1270.7,483.0 1267.3,487.7 1263.9,492.4 1260.6,497.1 1257.2,501.9 1253.8,506.6 1250.5,511.3 1247.1,516.0 1243.7,520.7 1240.3,525.4 1237.0,530.1 1233.6,534.9 1230.2,539.6 1226.8,544.3 1223.5,549.0 1220.1,553.7 1216.7,558.4 1213.4,563.1 1210.0,567.9 1206.6,572.6 1203.2,577.3 1199.9,582.0 1196.5,586.7 1193.1,591.4 1189.7,596.1 1186.4,600.9 1183.0,605.6 1179.6,610.3 1176.3,615.0 1172.9,619.7 1169.5,624.4 1166.1,629.1 1162.8,633.9 1167.0,634.9 1170.3,630.2 1173.6,625.6 1176.9,621.0 1180.2,616.3 1183.5,611.7 1186.8,607.1 1190.1,602.4 1193.4,597.8 1196.7,593.2 1200.0,588.5 1203.4,583.9 1206.7,579.3 1210.0,574.6 1213.3,570.0 1216.6,565.4 1219.9,560.7 1223.2,556.1 1226.5,551.5 1229.8,546.8 1233.1,542.2 1236.4,537.6 1239.7,532.9 1243.1,528.3 1246.4,523.7 1249.7,519.0 1253.0,514.4 1256.3,509.8 1259.6,505.1 1262.9,500.5 1266.2,495.9 1269.5,491.2 1272.8,486.6 1276.1,482.0 1279.4,477.3 1282.7,472.7 1286.1,468.1 1289.4,463.4 1292.7,458.8 1296.0,454.2 1299.3,449.5 1302.6,444.9 1305.9,440.3 1309.2,435.7 1312.5,431.0 1315.8,426.4 1319.1,421.8 1322.4,417.1 1325.8,412.5 1329.1,407.9 1332.4,403.2 1335.7,398.6 1339.0,394.0 1342.3,389.3 1345.6,384.7 1348.9,380.1 1352.2,375.4 1355.5,370.8 1358.8,366.2 1362.1,361.5" fill="#d6b89c"/>
<polygon points="1362.1,361.5 1358.8,366.2 1355.5,370.8 1352.2,375.4 1348.9,380.1 1345.6,384.7 1342.3,389.3 1339.0,394.0 1335.7,398.6 1332.4,403.2 1329.1,407.9 1325.8,412.5 1322.4,417.1 1319.1,421.8 1315.8,426.4 1312.5,431.0 1309.2,435.7 1305.9,440.3 1302.6,444.9 1299.3,449.5 1296.0,454.2 1292.7,458.8 1289.4,463.4 1286.1,468.1 1282.7,472.7 1279.4,477.3 1276.1,482.0 1272.8,486.6 1269.5,491.2 1266.2,495.9 1262.9,500.5 1259.6,505.1 1256.3,509.8 1253.0,514.4 1249.7,519.0 1246.4,523.7 1243.1,528.3 1239.7,532.9 1236.4,537.6 1233.1,542.2 1229.8,546.8 1226.5,551.5 1223.2,556.1 1219.9,560.7 1216.6,565.4 1213.3,570.0 1210.0,574.6 1206.7,579.3 1203.4,583.9 1200.0,588.5 1196.7,593.2 1193.4,597.8 1190.1,602.4 1186.8,607.1 1183.5,611.7 1180.2,616.3 1176.9,621.0 1173.6,625.6 1170.3,630.2 1167.0,634.9 1167.5,635.0 1170.8,630.4 1174.1,625.7 1177.4,621.1 1180.7,616.5 1184.0,611.9 1187.3,607.2 1190.6,602.6 1193.9,598.0 1197.2,593.4 1200.5,588.8 1203.8,584.1 1207.1,579.5 1210.4,574.9 1213.7,570.3 1217.0,565.6 1220.3,561.0 1223.6,556.4 1226.9,551.8 1230.2,547.1 1233.5,542.5 1236.8,537.9 1240.1,533.3 1243.4,528.7 1246.7,524.0 1250.0,519.4 1253.3,514.8 1256.6,510.2 1259.9,505.5 1263.2,500.9 1266.5,496.3 1269.8,491.7 1273.1,487.1 1276.4,482.4 1279.7,477.8 1283.0,473.2 1286.3,468.6 1289.6,463.9 1292.9,459.3 1296.2,454.7 1299.5,450.1 1302.8,445.5 1306.1,440.8 1309.4,436.2 1312.7,431.6 1316.0,427.0 1319.3,422.3 1322.6,417.7 1325.9,413.1 1329.2,408.5 1332.5,403.9 1335.8,399.2 1339.1,394.6 1342.4,390.0 1345.7,385.4 1349.0,380.7 1352.3,376.1 1355.6,371.5 1358.9,366.9 1362.2,362.3" fill="#a8905a"/>
<polygon points="1362.2,362.3 1358.9,366.9 1355.6,371.5 1352.3,376.1 1349.0,380.7 1345.7,385.4 1342.4,390.0 1339.1,394.6 1335.8,399.2 1332.5,403.9 1329.2,408.5 1325.9,413.1 1322.6,417.7 1319.3,422.3 1316.0,427.0 1312.7,431.6 1309.4,436.2 1306.1,440.8 1302.8,445.5 1299.5,450.1 1296.2,454.7 1292.9,459.3 1289.6,463.9 1286.3,468.6 1283.0,473.2 1279.7,477.8 1276.4,482.4 1273.1,487.1 1269.8,491.7 1266.5,496.3 1263.2,500.9 1259.9,505.5 1256.6,510.2 1253.3,514.8 1250.0,519.4 1246.7,524.0 1243.4,528.7 1240.1,533.3 1236.8,537.9 1233.5,542.5 1230.2,547.1 1226.9,551.8 1223.6,556.4 1220.3,561.0 1217.0,565.6 1213.7,570.3 1210.4,574.9 1207.1,579.5 1203.8,584.1 1200.5,588.8 1197.2,593.4 1193.9,598.0 1190.6,602.6 1187.3,607.2 1184.0,611.9 1180.7,616.5 1177.4,621.1 1174.1,625.7 1170.8,630.4 1167.5,635.0 1176.0,637.0 1179.2,632.5 1182.3,628.1 1185.5,623.6 1188.7,619.2 1191.8,614.7 1195.0,610.3 1198.2,605.8 1201.4,601.3 1204.5,596.9 1207.7,592.4 1210.9,588.0 1214.0,583.5 1217.2,579.1 1220.4,574.6 1223.5,570.1 1226.7,565.7 1229.9,561.2 1233.1,556.8 1236.2,552.3 1239.4,547.8 1242.6,543.4 1245.7,538.9 1248.9,534.5 1252.1,530.0 1255.2,525.6 1258.4,521.1 1261.6,516.6 1264.7,512.2 1267.9,507.7 1271.1,503.3 1274.3,498.8 1277.4,494.4 1280.6,489.9 1283.8,485.4 1286.9,481.0 1290.1,476.5 1293.3,472.1 1296.4,467.6 1299.6,463.2 1302.8,458.7 1305.9,454.2 1309.1,449.8 1312.3,445.3 1315.5,440.9 1318.6,436.4 1321.8,431.9 1325.0,427.5 1328.1,423.0 1331.3,418.6 1334.5,414.1 1337.6,409.7 1340.8,405.2 1344.0,400.7 1347.2,396.3 1350.3,391.8 1353.5,387.4 1356.7,382.9 1359.8,378.5 1363.0,374.0" fill="#eaaca6"/>
<polyline points="1176.0,637.0 1363.0,374.0 1842.0,504.0" fill="none" stroke="#b83050" stroke-width="0.8"/>
<polyline points="1155.0,632.0 1361.0,345.0 1478.0,377.0 1558.6,401.0 1640.0,419.4 1723.0,447.5 1852.0,482.0" fill="none" stroke="#a00020" stroke-width="1.3" stroke-dasharray="2.5 1"/>
<line x1="1362.5" y1="350" x2="1363.5" y2="374" stroke="#c89860" stroke-width="1"/>
<line x1="1478" y1="377" x2="1285" y2="672" stroke="#b02848" stroke-width="0.65"/>
<line x1="1558.6" y1="401" x2="1374.6" y2="702" stroke="#b02848" stroke-width="0.65"/>
<line x1="1640" y1="419.4" x2="1466" y2="728.5" stroke="#b02848" stroke-width="0.65"/>
<line x1="1723" y1="447.5" x2="1560" y2="762" stroke="#b02848" stroke-width="0.65"/>
<polygon points="1388.6,515.8 1392.9,517.1 1397.2,518.5 1401.6,519.8 1405.9,521.1 1410.2,522.5 1414.5,523.8 1418.9,525.1 1423.2,526.5 1427.5,527.8 1431.8,529.1 1436.2,530.5 1440.5,531.8 1444.8,533.1 1449.1,534.5 1453.5,535.8 1457.8,537.1 1462.1,538.4 1466.4,539.8 1470.7,541.1 1475.1,542.3 1479.5,543.5 1483.9,544.6 1488.2,545.7 1492.6,546.9 1497.0,548.0 1501.4,549.2 1505.7,550.3 1510.1,551.5 1514.5,552.6 1518.9,553.8 1523.3,554.9 1527.6,556.1 1532.0,557.2 1536.4,558.3 1540.8,559.5 1545.1,560.6 1549.5,561.8 1553.9,562.9 1558.3,564.1 1562.5,565.5 1566.8,567.0 1571.1,568.4 1575.4,569.9 1579.7,571.3 1584.0,572.8 1588.3,574.2 1592.6,575.7 1596.8,577.1 1601.1,578.5 1605.4,580.0 1609.7,581.4 1614.0,582.9 1618.3,584.3 1622.6,585.8 1626.9,587.2 1631.1,588.7 1635.4,590.1 1639.7,591.6 1644.0,593.0 1643.4,602.4 1639.2,600.9 1634.9,599.5 1630.6,598.0 1626.3,596.5 1622.0,595.1 1617.7,593.6 1613.4,592.1 1609.2,590.7 1604.9,589.2 1600.6,587.7 1596.3,586.2 1592.0,584.8 1587.7,583.3 1583.4,581.8 1579.2,580.3 1574.9,578.8 1570.6,577.3 1566.3,575.9 1562.0,574.4 1557.7,572.9 1553.4,571.6 1549.1,570.3 1544.7,569.0 1540.4,567.8 1536.0,566.5 1531.7,565.2 1527.3,563.9 1523.0,562.7 1518.6,561.4 1514.3,560.1 1509.9,558.8 1505.6,557.6 1501.2,556.3 1496.8,555.0 1492.5,553.8 1488.1,552.5 1483.8,551.2 1479.4,549.9 1475.1,548.7 1470.7,547.4 1466.4,546.0 1462.1,544.6 1457.8,543.1 1453.5,541.7 1449.1,540.3 1444.8,538.9 1440.5,537.5 1436.2,536.1 1431.9,534.7 1427.5,533.3 1423.2,531.8 1418.9,530.4 1414.6,529.0 1410.3,527.6 1405.9,526.2 1401.6,524.8 1397.3,523.3 1393.0,521.9 1388.7,520.5" fill="#c9cdd0"/>
<polygon points="1388.7,520.5 1393.0,521.9 1397.3,523.3 1401.6,524.8 1405.9,526.2 1410.3,527.6 1414.6,529.0 1418.9,530.4 1423.2,531.8 1427.5,533.3 1431.9,534.7 1436.2,536.1 1440.5,537.5 1444.8,538.9 1449.1,540.3 1453.5,541.7 1457.8,543.1 1462.1,544.6 1466.4,546.0 1470.7,547.4 1475.1,548.7 1479.4,549.9 1483.8,551.2 1488.1,552.5 1492.5,553.8 1496.8,555.0 1501.2,556.3 1505.6,557.6 1509.9,558.8 1514.3,560.1 1518.6,561.4 1523.0,562.7 1527.3,563.9 1531.7,565.2 1536.0,566.5 1540.4,567.8 1544.7,569.0 1549.1,570.3 1553.4,571.6 1557.7,572.9 1562.0,574.4 1566.3,575.9 1570.6,577.3 1574.9,578.8 1579.2,580.3 1583.4,581.8 1587.7,583.3 1592.0,584.8 1596.3,586.2 1600.6,587.7 1604.9,589.2 1609.2,590.7 1613.4,592.1 1617.7,593.6 1622.0,595.1 1626.3,596.5 1630.6,598.0 1634.9,599.5 1639.2,600.9 1643.4,602.4 1643.3,605.4 1639.0,604.0 1634.7,602.6 1630.4,601.1 1626.1,599.7 1621.8,598.3 1617.5,596.9 1613.2,595.4 1609.0,594.0 1604.7,592.6 1600.4,591.1 1596.1,589.7 1591.8,588.3 1587.5,586.9 1583.2,585.4 1578.9,584.0 1574.7,582.5 1570.4,581.1 1566.1,579.7 1561.8,578.2 1557.5,576.8 1553.2,575.5 1548.8,574.2 1544.5,573.0 1540.2,571.7 1535.8,570.4 1531.5,569.2 1527.1,567.9 1522.8,566.6 1518.5,565.4 1514.1,564.1 1509.8,562.8 1505.4,561.6 1501.1,560.3 1496.8,559.0 1492.4,557.8 1488.1,556.5 1483.7,555.2 1479.4,554.0 1475.0,552.7 1470.7,551.4 1466.4,550.0 1462.1,548.7 1457.8,547.3 1453.5,545.9 1449.1,544.5 1444.8,543.1 1440.5,541.8 1436.2,540.4 1431.9,539.0 1427.6,537.6 1423.3,536.3 1418.9,534.9 1414.6,533.5 1410.3,532.1 1406.0,530.7 1401.7,529.3 1397.4,528.0 1393.0,526.6 1388.7,525.2" fill="#e8b074"/>
<polygon points="1388.7,525.2 1393.0,526.6 1397.4,528.0 1401.7,529.3 1406.0,530.7 1410.3,532.1 1414.6,533.5 1418.9,534.9 1423.3,536.3 1427.6,537.6 1431.9,539.0 1436.2,540.4 1440.5,541.8 1444.8,543.1 1449.1,544.5 1453.5,545.9 1457.8,547.3 1462.1,548.7 1466.4,550.0 1470.7,551.4 1475.0,552.7 1479.4,554.0 1483.7,555.2 1488.1,556.5 1492.4,557.8 1496.8,559.0 1501.1,560.3 1505.4,561.6 1509.8,562.8 1514.1,564.1 1518.5,565.4 1522.8,566.6 1527.1,567.9 1531.5,569.2 1535.8,570.4 1540.2,571.7 1544.5,573.0 1548.8,574.2 1553.2,575.5 1557.5,576.8 1561.8,578.2 1566.1,579.7 1570.4,581.1 1574.7,582.5 1578.9,584.0 1583.2,585.4 1587.5,586.9 1591.8,588.3 1596.1,589.7 1600.4,591.1 1604.7,592.6 1609.0,594.0 1613.2,595.4 1617.5,596.9 1621.8,598.3 1626.1,599.7 1630.4,601.1 1634.7,602.6 1639.0,604.0 1643.3,605.4 1643.0,610.1 1638.7,608.7 1634.4,607.3 1630.1,606.0 1625.8,604.6 1621.5,603.2 1617.2,601.8 1612.9,600.4 1608.7,599.0 1604.4,597.6 1600.1,596.3 1595.8,594.9 1591.5,593.5 1587.2,592.1 1582.9,590.7 1578.6,589.3 1574.3,587.9 1570.1,586.5 1565.8,585.1 1561.5,583.7 1557.2,582.3 1552.9,581.0 1548.5,579.7 1544.2,578.4 1539.9,577.1 1535.6,575.9 1531.3,574.6 1526.9,573.3 1522.6,572.0 1518.3,570.7 1514.0,569.4 1509.6,568.1 1505.3,566.9 1501.0,565.6 1496.6,564.3 1492.3,563.0 1488.0,561.7 1483.7,560.5 1479.3,559.2 1475.0,557.9 1470.7,556.6 1466.4,555.2 1462.1,553.9 1457.8,552.5 1453.5,551.2 1449.1,549.8 1444.8,548.5 1440.5,547.1 1436.2,545.7 1431.9,544.4 1427.6,543.0 1423.3,541.6 1419.0,540.3 1414.7,538.9 1410.4,537.6 1406.1,536.2 1401.7,534.8 1397.4,533.5 1393.1,532.1 1388.8,530.7" fill="#b89a60"/>
<polygon points="1388.8,530.7 1393.1,532.1 1397.4,533.5 1401.7,534.8 1406.1,536.2 1410.4,537.6 1414.7,538.9 1419.0,540.3 1423.3,541.6 1427.6,543.0 1431.9,544.4 1436.2,545.7 1440.5,547.1 1444.8,548.5 1449.1,549.8 1453.5,551.2 1457.8,552.5 1462.1,553.9 1466.4,555.2 1470.7,556.6 1475.0,557.9 1479.3,559.2 1483.7,560.5 1488.0,561.7 1492.3,563.0 1496.6,564.3 1501.0,565.6 1505.3,566.9 1509.6,568.1 1514.0,569.4 1518.3,570.7 1522.6,572.0 1526.9,573.3 1531.3,574.6 1535.6,575.9 1539.9,577.1 1544.2,578.4 1548.5,579.7 1552.9,581.0 1557.2,582.3 1561.5,583.7 1565.8,585.1 1570.1,586.5 1574.3,587.9 1578.6,589.3 1582.9,590.7 1587.2,592.1 1591.5,593.5 1595.8,594.9 1600.1,596.3 1604.4,597.6 1608.7,599.0 1612.9,600.4 1617.2,601.8 1621.5,603.2 1625.8,604.6 1630.1,606.0 1634.4,607.3 1638.7,608.7 1643.0,610.1 1642.5,618.0 1638.2,616.7 1633.9,615.5 1629.6,614.2 1625.3,613.0 1621.0,611.7 1616.7,610.5 1612.4,609.2 1608.1,608.0 1603.8,606.7 1599.5,605.5 1595.2,604.2 1590.9,602.9 1586.6,601.7 1582.3,600.4 1578.1,599.2 1573.8,597.9 1569.5,596.7 1565.2,595.4 1560.9,594.2 1556.6,592.9 1552.3,591.7 1548.0,590.4 1543.7,589.2 1539.4,587.9 1535.1,586.6 1530.8,585.4 1526.5,584.1 1522.2,582.9 1517.9,581.6 1513.6,580.4 1509.3,579.1 1505.0,577.9 1500.7,576.6 1496.4,575.4 1492.1,574.1 1487.8,572.8 1483.5,571.6 1479.2,570.3 1474.9,569.1 1470.6,567.8 1466.3,566.6 1462.0,565.3 1457.7,564.1 1453.4,562.8 1449.2,561.6 1444.9,560.3 1440.6,559.1 1436.3,557.8 1432.0,556.5 1427.7,555.3 1423.4,554.0 1419.1,552.8 1414.8,551.5 1410.5,550.3 1406.2,549.0 1401.9,547.8 1397.6,546.5 1393.3,545.3 1389.0,544.0" fill="#e8896e"/>
<polyline points="1388.6,515.8 1472.0,541.5 1558.0,564.0 1644.0,593.0" fill="none" stroke="#a01838" stroke-width="1" stroke-dasharray="2 1"/>
<line x1="1478" y1="377" x2="1285" y2="672" stroke="#b02848" stroke-width="0.65" opacity="0.9"/>
<line x1="1558.6" y1="401" x2="1374.6" y2="702" stroke="#b02848" stroke-width="0.65" opacity="0.9"/>
<line x1="1640" y1="419.4" x2="1466" y2="728.5" stroke="#b02848" stroke-width="0.65" opacity="0.9"/>
<line x1="1723" y1="447.5" x2="1560" y2="762" stroke="#b02848" stroke-width="0.65" opacity="0.9"/>
<path d="M1383 516l5 -3.5l5 3.5l-5 3.5z" fill="#f0c000" stroke="#c08000" stroke-width="0.6"/>
<rect x="1420.5" y="459" width="11" height="28" fill="#f09070"/><rect x="1421" y="459" width="10" height="7.0" fill="#c8d0d0"/><rect x="1421" y="466.0" width="10" height="4.8" fill="#e8b880"/><rect x="1421" y="470.8" width="10" height="4.8" fill="#b89a60"/><ellipse cx="1426" cy="487" rx="5" ry="2.5" fill="#ec9a80"/><ellipse cx="1426" cy="459" rx="6" ry="3.5" fill="#f8e8e8" stroke="#a00010" stroke-width="1.1" stroke-dasharray="1.6 0.9"/><ellipse cx="1426" cy="459" rx="3.5" ry="2.2" fill="#a010f0"/>
<rect x="1571.5" y="533" width="11" height="28" fill="#f09070"/><rect x="1572" y="533" width="10" height="7.0" fill="#c8d0d0"/><rect x="1572" y="540.0" width="10" height="4.8" fill="#e8b880"/><rect x="1572" y="544.8" width="10" height="4.8" fill="#b89a60"/><ellipse cx="1577" cy="561" rx="5" ry="2.5" fill="#ec9a80"/><ellipse cx="1577" cy="533" rx="6" ry="3.5" fill="#f8e8e8" stroke="#a00010" stroke-width="1.1" stroke-dasharray="1.6 0.9"/><ellipse cx="1577" cy="533" rx="3.5" ry="2.2" fill="#a010f0"/>
<rect x="1430.0" y="603" width="11" height="30" fill="#f09070"/><rect x="1430.5" y="603" width="10" height="7.5" fill="#c8d0d0"/><rect x="1430.5" y="610.5" width="10" height="5.1" fill="#e8b880"/><rect x="1430.5" y="615.6" width="10" height="5.1" fill="#b89a60"/><ellipse cx="1435.5" cy="633" rx="5" ry="2.5" fill="#ec9a80"/><ellipse cx="1435.5" cy="603" rx="6" ry="3.5" fill="#f8e8e8" stroke="#a00010" stroke-width="1.1" stroke-dasharray="1.6 0.9"/><ellipse cx="1435.5" cy="603" rx="3.5" ry="2.2" fill="#a010f0"/>
<rect x="1641.5" y="596" width="11" height="22" fill="#f09070"/><rect x="1642" y="596" width="10" height="5.5" fill="#c8d0d0"/><rect x="1642" y="601.5" width="10" height="3.7" fill="#e8b880"/><rect x="1642" y="605.2" width="10" height="3.7" fill="#b89a60"/><ellipse cx="1647" cy="618" rx="5" ry="2.5" fill="#ec9a80"/><ellipse cx="1647" cy="596" rx="6" ry="3.5" fill="#f8e8e8" stroke="#a00010" stroke-width="1.1" stroke-dasharray="1.6 0.9"/><ellipse cx="1647" cy="596" rx="3.5" ry="2.2" fill="#a010f0"/>
<polygon points="1155.0,632.0 1285.0,672.0 1374.6,702.0 1466.0,728.5 1560.0,762.0 1704.0,808.0 1702.0,833.0 1158.0,660.0" fill="#f2ae8e"/>
<polygon points="1155.0,632.0 1158.5,633.1 1161.9,634.1 1165.4,635.2 1168.9,636.3 1172.3,637.3 1175.8,638.4 1179.3,639.5 1182.7,640.5 1186.2,641.6 1189.7,642.7 1193.1,643.7 1196.6,644.8 1200.1,645.9 1203.5,646.9 1207.0,648.0 1210.5,649.1 1213.9,650.1 1217.4,651.2 1220.9,652.3 1224.3,653.3 1227.8,654.4 1231.3,655.5 1234.7,656.5 1238.2,657.6 1241.7,658.7 1245.1,659.7 1248.6,660.8 1252.1,661.9 1255.5,662.9 1259.0,664.0 1262.5,665.1 1265.9,666.1 1269.4,667.2 1272.9,668.3 1276.3,669.3 1279.8,670.4 1283.3,671.5 1286.7,672.6 1290.1,673.7 1293.6,674.9 1297.0,676.0 1300.5,677.2 1303.9,678.3 1307.3,679.5 1310.8,680.6 1314.2,681.8 1317.7,682.9 1321.1,684.1 1324.5,685.2 1328.0,686.4 1331.4,687.5 1334.8,688.7 1338.3,689.8 1341.7,691.0 1345.2,692.1 1348.6,693.3 1352.0,694.4 1355.5,695.6 1358.9,696.8 1362.4,697.9 1365.8,699.1 1369.2,700.2 1372.7,701.4 1376.1,702.4 1379.6,703.5 1383.1,704.5 1386.6,705.5 1390.1,706.5 1393.6,707.5 1397.0,708.5 1400.5,709.5 1404.0,710.5 1407.5,711.5 1411.0,712.5 1414.4,713.6 1417.9,714.6 1421.4,715.6 1424.9,716.6 1428.4,717.6 1431.9,718.6 1435.3,719.6 1438.8,720.6 1442.3,721.6 1445.8,722.6 1449.3,723.7 1452.8,724.7 1456.2,725.7 1459.7,726.7 1463.2,727.7 1466.7,728.7 1470.1,730.0 1473.5,731.2 1476.9,732.4 1480.3,733.6 1483.8,734.8 1487.2,736.0 1490.6,737.3 1494.0,738.5 1497.4,739.7 1500.8,740.9 1504.3,742.1 1507.7,743.4 1511.1,744.6 1514.5,745.8 1517.9,747.0 1521.3,748.2 1524.8,749.4 1528.2,750.7 1531.6,751.9 1535.0,753.1 1538.4,754.3 1541.8,755.5 1545.3,756.7 1548.7,758.0 1552.1,759.2 1555.5,760.4 1558.9,761.6 1562.4,762.8 1565.8,763.9 1569.3,765.0 1572.7,766.1 1576.2,767.2 1579.6,768.3 1583.1,769.4 1586.5,770.5 1590.0,771.6 1593.5,772.7 1596.9,773.8 1600.4,774.9 1603.8,776.0 1607.3,777.1 1610.7,778.2 1614.2,779.3 1617.6,780.4 1621.1,781.5 1624.5,782.6 1628.0,783.7 1631.5,784.8 1634.9,785.9 1638.4,787.0 1641.8,788.1 1645.3,789.2 1648.7,790.3 1652.2,791.4 1655.6,792.6 1659.1,793.7 1662.5,794.8 1666.0,795.9 1669.5,797.0 1672.9,798.1 1676.4,799.2 1679.8,800.3 1683.3,801.4 1686.7,802.5 1690.2,803.6 1693.6,804.7 1697.1,805.8 1700.5,806.9 1704.0,808.0 1704.0,809.0 1700.5,807.9 1697.1,806.8 1693.6,805.7 1690.2,804.6 1686.7,803.5 1683.3,802.4 1679.8,801.3 1676.4,800.2 1672.9,799.1 1669.5,798.0 1666.0,796.9 1662.5,795.8 1659.1,794.7 1655.6,793.6 1652.2,792.4 1648.7,791.3 1645.3,790.2 1641.8,789.1 1638.4,788.0 1634.9,786.9 1631.5,785.8 1628.0,784.7 1624.5,783.6 1621.1,782.5 1617.6,781.4 1614.2,780.3 1610.7,779.2 1607.3,778.1 1603.8,777.0 1600.4,775.9 1596.9,774.8 1593.5,773.7 1590.0,772.6 1586.5,771.5 1583.1,770.4 1579.6,769.3 1576.2,768.2 1572.7,767.1 1569.3,766.0 1565.8,764.9 1562.4,763.8 1558.9,762.6 1555.5,761.4 1552.1,760.2 1548.7,759.0 1545.3,757.8 1541.8,756.6 1538.4,755.4 1535.0,754.1 1531.6,752.9 1528.2,751.7 1524.8,750.5 1521.3,749.3 1517.9,748.1 1514.5,746.9 1511.1,745.7 1507.7,744.5 1504.3,743.3 1500.8,742.0 1497.4,740.8 1494.0,739.6 1490.6,738.4 1487.2,737.2 1483.8,736.0 1480.3,734.8 1476.9,733.6 1473.5,732.4 1470.1,731.2 1466.7,729.9 1463.2,728.9 1459.7,727.9 1456.2,726.9 1452.8,725.8 1449.3,724.8 1445.8,723.8 1442.3,722.8 1438.8,721.8 1435.3,720.7 1431.9,719.7 1428.4,718.7 1424.9,717.7 1421.4,716.7 1417.9,715.7 1414.4,714.6 1411.0,713.6 1407.5,712.6 1404.0,711.6 1400.5,710.6 1397.0,709.6 1393.6,708.5 1390.1,707.5 1386.6,706.5 1383.1,705.5 1379.6,704.5 1376.1,703.4 1372.7,702.4 1369.2,701.2 1365.8,700.1 1362.4,698.9 1358.9,697.8 1355.5,696.6 1352.0,695.4 1348.6,694.3 1345.2,693.1 1341.7,692.0 1338.3,690.8 1334.8,689.7 1331.4,688.5 1328.0,687.4 1324.5,686.2 1321.1,685.1 1317.7,683.9 1314.2,682.8 1310.8,681.6 1307.3,680.5 1303.9,679.3 1300.5,678.2 1297.0,677.0 1293.6,675.9 1290.1,674.7 1286.7,673.6 1283.3,672.5 1279.8,671.4 1276.3,670.3 1272.9,669.3 1269.4,668.2 1265.9,667.1 1262.5,666.1 1259.0,665.0 1255.5,663.9 1252.1,662.9 1248.6,661.8 1245.1,660.7 1241.7,659.7 1238.2,658.6 1234.7,657.5 1231.3,656.5 1227.8,655.4 1224.3,654.3 1220.9,653.3 1217.4,652.2 1213.9,651.1 1210.5,650.1 1207.0,649.0 1203.5,647.9 1200.1,646.9 1196.6,645.8 1193.1,644.7 1189.7,643.7 1186.2,642.6 1182.7,641.5 1179.3,640.5 1175.8,639.4 1172.3,638.3 1168.9,637.3 1165.4,636.2 1161.9,635.1 1158.5,634.1 1155.0,633.0" fill="#a01020"/>
<polygon points="1155.0,633.0 1158.5,634.1 1161.9,635.1 1165.4,636.2 1168.9,637.3 1172.3,638.3 1175.8,639.4 1179.3,640.5 1182.7,641.5 1186.2,642.6 1189.7,643.7 1193.1,644.7 1196.6,645.8 1200.1,646.9 1203.5,647.9 1207.0,649.0 1210.5,650.1 1213.9,651.1 1217.4,652.2 1220.9,653.3 1224.3,654.3 1227.8,655.4 1231.3,656.5 1234.7,657.5 1238.2,658.6 1241.7,659.7 1245.1,660.7 1248.6,661.8 1252.1,662.9 1255.5,663.9 1259.0,665.0 1262.5,666.1 1265.9,667.1 1269.4,668.2 1272.9,669.3 1276.3,670.3 1279.8,671.4 1283.3,672.5 1286.7,673.6 1290.1,674.7 1293.6,675.9 1297.0,677.0 1300.5,678.2 1303.9,679.3 1307.3,680.5 1310.8,681.6 1314.2,682.8 1317.7,683.9 1321.1,685.1 1324.5,686.2 1328.0,687.4 1331.4,688.5 1334.8,689.7 1338.3,690.8 1341.7,692.0 1345.2,693.1 1348.6,694.3 1352.0,695.4 1355.5,696.6 1358.9,697.8 1362.4,698.9 1365.8,700.1 1369.2,701.2 1372.7,702.4 1376.1,703.4 1379.6,704.5 1383.1,705.5 1386.6,706.5 1390.1,707.5 1393.6,708.5 1397.0,709.6 1400.5,710.6 1404.0,711.6 1407.5,712.6 1411.0,713.6 1414.4,714.6 1417.9,715.7 1421.4,716.7 1424.9,717.7 1428.4,718.7 1431.9,719.7 1435.3,720.7 1438.8,721.8 1442.3,722.8 1445.8,723.8 1449.3,724.8 1452.8,725.8 1456.2,726.9 1459.7,727.9 1463.2,728.9 1466.7,729.9 1470.1,731.2 1473.5,732.4 1476.9,733.6 1480.3,734.8 1483.8,736.0 1487.2,737.2 1490.6,738.4 1494.0,739.6 1497.4,740.8 1500.8,742.0 1504.3,743.3 1507.7,744.5 1511.1,745.7 1514.5,746.9 1517.9,748.1 1521.3,749.3 1524.8,750.5 1528.2,751.7 1531.6,752.9 1535.0,754.1 1538.4,755.4 1541.8,756.6 1545.3,757.8 1548.7,759.0 1552.1,760.2 1555.5,761.4 1558.9,762.6 1562.4,763.8 1565.8,764.9 1569.3,766.0 1572.7,767.1 1576.2,768.2 1579.6,769.3 1583.1,770.4 1586.5,771.5 1590.0,772.6 1593.5,773.7 1596.9,774.8 1600.4,775.9 1603.8,777.0 1607.3,778.1 1610.7,779.2 1614.2,780.3 1617.6,781.4 1621.1,782.5 1624.5,783.6 1628.0,784.7 1631.5,785.8 1634.9,786.9 1638.4,788.0 1641.8,789.1 1645.3,790.2 1648.7,791.3 1652.2,792.4 1655.6,793.6 1659.1,794.7 1662.5,795.8 1666.0,796.9 1669.5,798.0 1672.9,799.1 1676.4,800.2 1679.8,801.3 1683.3,802.4 1686.7,803.5 1690.2,804.6 1693.6,805.7 1697.1,806.8 1700.5,807.9 1704.0,809.0 1704.0,809.8 1700.5,808.7 1697.1,807.6 1693.6,806.5 1690.2,805.4 1686.7,804.3 1683.3,803.2 1679.8,802.1 1676.4,801.0 1672.9,799.9 1669.5,798.8 1666.0,797.7 1662.5,796.6 1659.1,795.5 1655.6,794.4 1652.2,793.3 1648.7,792.2 1645.3,791.1 1641.8,790.0 1638.4,788.9 1634.9,787.8 1631.5,786.7 1628.0,785.6 1624.5,784.5 1621.1,783.4 1617.6,782.3 1614.2,781.2 1610.7,780.1 1607.3,779.0 1603.8,777.9 1600.4,776.8 1596.9,775.7 1593.5,774.6 1590.0,773.5 1586.5,772.4 1583.1,771.3 1579.6,770.2 1576.2,769.1 1572.7,768.0 1569.3,766.9 1565.8,765.8 1562.4,764.8 1558.9,763.6 1555.5,762.5 1552.1,761.4 1548.7,760.3 1545.3,759.2 1541.8,758.1 1538.4,757.0 1535.0,755.9 1531.6,754.8 1528.2,753.7 1524.8,752.6 1521.3,751.5 1517.9,750.3 1514.5,749.2 1511.1,748.1 1507.7,747.0 1504.3,745.9 1500.8,744.8 1497.4,743.7 1494.0,742.6 1490.6,741.5 1487.2,740.4 1483.8,739.3 1480.3,738.2 1476.9,737.0 1473.5,735.9 1470.1,734.8 1466.7,733.7 1463.2,732.6 1459.7,731.5 1456.2,730.5 1452.8,729.4 1449.3,728.3 1445.8,727.2 1442.3,726.1 1438.8,725.0 1435.3,723.9 1431.9,722.9 1428.4,721.8 1424.9,720.7 1421.4,719.6 1417.9,718.5 1414.4,717.4 1411.0,716.3 1407.5,715.2 1404.0,714.2 1400.5,713.1 1397.0,712.0 1393.6,710.9 1390.1,709.8 1386.6,708.7 1383.1,707.6 1379.6,706.6 1376.1,705.5 1372.7,704.4 1369.2,703.2 1365.8,702.1 1362.4,700.9 1358.9,699.8 1355.5,698.6 1352.0,697.4 1348.6,696.3 1345.2,695.1 1341.7,694.0 1338.3,692.8 1334.8,691.7 1331.4,690.5 1328.0,689.4 1324.5,688.2 1321.1,687.1 1317.7,685.9 1314.2,684.8 1310.8,683.6 1307.3,682.5 1303.9,681.3 1300.5,680.2 1297.0,679.0 1293.6,677.9 1290.1,676.7 1286.7,675.5 1283.3,674.4 1279.8,673.3 1276.3,672.2 1272.9,671.2 1269.4,670.1 1265.9,669.0 1262.5,667.9 1259.0,666.9 1255.5,665.8 1252.1,664.7 1248.6,663.6 1245.1,662.5 1241.7,661.5 1238.2,660.4 1234.7,659.3 1231.3,658.2 1227.8,657.1 1224.3,656.1 1220.9,655.0 1217.4,653.9 1213.9,652.8 1210.5,651.8 1207.0,650.7 1203.5,649.6 1200.1,648.5 1196.6,647.4 1193.1,646.4 1189.7,645.3 1186.2,644.2 1182.7,643.1 1179.3,642.0 1175.8,641.0 1172.3,639.9 1168.9,638.8 1165.4,637.7 1161.9,636.7 1158.5,635.6 1155.0,634.5" fill="#b4f4e4"/>
<polygon points="1155.0,634.5 1158.5,635.6 1161.9,636.7 1165.4,637.7 1168.9,638.8 1172.3,639.9 1175.8,641.0 1179.3,642.0 1182.7,643.1 1186.2,644.2 1189.7,645.3 1193.1,646.4 1196.6,647.4 1200.1,648.5 1203.5,649.6 1207.0,650.7 1210.5,651.8 1213.9,652.8 1217.4,653.9 1220.9,655.0 1224.3,656.1 1227.8,657.1 1231.3,658.2 1234.7,659.3 1238.2,660.4 1241.7,661.5 1245.1,662.5 1248.6,663.6 1252.1,664.7 1255.5,665.8 1259.0,666.9 1262.5,667.9 1265.9,669.0 1269.4,670.1 1272.9,671.2 1276.3,672.2 1279.8,673.3 1283.3,674.4 1286.7,675.5 1290.1,676.7 1293.6,677.9 1297.0,679.0 1300.5,680.2 1303.9,681.3 1307.3,682.5 1310.8,683.6 1314.2,684.8 1317.7,685.9 1321.1,687.1 1324.5,688.2 1328.0,689.4 1331.4,690.5 1334.8,691.7 1338.3,692.8 1341.7,694.0 1345.2,695.1 1348.6,696.3 1352.0,697.4 1355.5,698.6 1358.9,699.8 1362.4,700.9 1365.8,702.1 1369.2,703.2 1372.7,704.4 1376.1,705.5 1379.6,706.6 1383.1,707.6 1386.6,708.7 1390.1,709.8 1393.6,710.9 1397.0,712.0 1400.5,713.1 1404.0,714.2 1407.5,715.2 1411.0,716.3 1414.4,717.4 1417.9,718.5 1421.4,719.6 1424.9,720.7 1428.4,721.8 1431.9,722.9 1435.3,723.9 1438.8,725.0 1442.3,726.1 1445.8,727.2 1449.3,728.3 1452.8,729.4 1456.2,730.5 1459.7,731.5 1463.2,732.6 1466.7,733.7 1470.1,734.8 1473.5,735.9 1476.9,737.0 1480.3,738.2 1483.8,739.3 1487.2,740.4 1490.6,741.5 1494.0,742.6 1497.4,743.7 1500.8,744.8 1504.3,745.9 1507.7,747.0 1511.1,748.1 1514.5,749.2 1517.9,750.3 1521.3,751.5 1524.8,752.6 1528.2,753.7 1531.6,754.8 1535.0,755.9 1538.4,757.0 1541.8,758.1 1545.3,759.2 1548.7,760.3 1552.1,761.4 1555.5,762.5 1558.9,763.6 1562.4,764.8 1565.8,765.8 1569.3,766.9 1572.7,768.0 1576.2,769.1 1579.6,770.2 1583.1,771.3 1586.5,772.4 1590.0,773.5 1593.5,774.6 1596.9,775.7 1600.4,776.8 1603.8,777.9 1607.3,779.0 1610.7,780.1 1614.2,781.2 1617.6,782.3 1621.1,783.4 1624.5,784.5 1628.0,785.6 1631.5,786.7 1634.9,787.8 1638.4,788.9 1641.8,790.0 1645.3,791.1 1648.7,792.2 1652.2,793.3 1655.6,794.4 1659.1,795.5 1662.5,796.6 1666.0,797.7 1669.5,798.8 1672.9,799.9 1676.4,801.0 1679.8,802.1 1683.3,803.2 1686.7,804.3 1690.2,805.4 1693.6,806.5 1697.1,807.6 1700.5,808.7 1704.0,809.8 1704.0,812.0 1700.5,810.9 1697.1,809.8 1693.6,808.7 1690.2,807.6 1686.7,806.5 1683.3,805.4 1679.8,804.3 1676.4,803.2 1672.9,802.1 1669.5,801.0 1666.0,799.9 1662.5,798.8 1659.1,797.7 1655.6,796.7 1652.2,795.6 1648.7,794.5 1645.3,793.4 1641.8,792.3 1638.4,791.2 1634.9,790.1 1631.5,789.0 1628.0,787.9 1624.5,786.8 1621.1,785.7 1617.6,784.6 1614.2,783.5 1610.7,782.4 1607.3,781.3 1603.8,780.2 1600.4,779.1 1596.9,778.0 1593.5,776.9 1590.0,775.8 1586.5,774.7 1583.1,773.6 1579.6,772.5 1576.2,771.4 1572.7,770.3 1569.3,769.2 1565.8,768.1 1562.4,767.0 1558.9,765.9 1555.5,764.8 1552.1,763.7 1548.7,762.6 1545.3,761.5 1541.8,760.4 1538.4,759.3 1535.0,758.2 1531.6,757.1 1528.2,756.0 1524.8,754.9 1521.3,753.8 1517.9,752.6 1514.5,751.5 1511.1,750.4 1507.7,749.3 1504.3,748.2 1500.8,747.1 1497.4,746.0 1494.0,744.9 1490.6,743.8 1487.2,742.7 1483.8,741.6 1480.3,740.5 1476.9,739.3 1473.5,738.2 1470.1,737.1 1466.7,736.0 1463.2,734.9 1459.7,733.8 1456.2,732.8 1452.8,731.7 1449.3,730.6 1445.8,729.5 1442.3,728.4 1438.8,727.3 1435.3,726.2 1431.9,725.2 1428.4,724.1 1424.9,723.0 1421.4,721.9 1417.9,720.8 1414.4,719.7 1411.0,718.6 1407.5,717.5 1404.0,716.5 1400.5,715.4 1397.0,714.3 1393.6,713.2 1390.1,712.1 1386.6,711.0 1383.1,709.9 1379.6,708.9 1376.1,707.8 1372.7,706.7 1369.2,705.5 1365.8,704.4 1362.4,703.3 1358.9,702.1 1355.5,701.0 1352.0,699.8 1348.6,698.7 1345.2,697.6 1341.7,696.4 1338.3,695.3 1334.8,694.2 1331.4,693.0 1328.0,691.9 1324.5,690.7 1321.1,689.6 1317.7,688.5 1314.2,687.3 1310.8,686.2 1307.3,685.0 1303.9,683.9 1300.5,682.8 1297.0,681.6 1293.6,680.4 1290.1,679.3 1286.7,678.1 1283.3,677.0 1279.8,675.9 1276.3,674.8 1272.9,673.7 1269.4,672.6 1265.9,671.5 1262.5,670.5 1259.0,669.4 1255.5,668.3 1252.1,667.2 1248.6,666.1 1245.1,665.0 1241.7,663.9 1238.2,662.9 1234.7,661.8 1231.3,660.7 1227.8,659.6 1224.3,658.5 1220.9,657.4 1217.4,656.3 1213.9,655.3 1210.5,654.2 1207.0,653.1 1203.5,652.0 1200.1,650.9 1196.6,649.8 1193.1,648.7 1189.7,647.7 1186.2,646.6 1182.7,645.5 1179.3,644.4 1175.8,643.3 1172.3,642.2 1168.9,641.1 1165.4,640.1 1161.9,639.0 1158.5,637.9 1155.0,636.8" fill="#0a0af0"/>
<polygon points="1155.0,636.8 1158.5,637.9 1161.9,639.0 1165.4,640.1 1168.9,641.1 1172.3,642.2 1175.8,643.3 1179.3,644.4 1182.7,645.5 1186.2,646.6 1189.7,647.7 1193.1,648.7 1196.6,649.8 1200.1,650.9 1203.5,652.0 1207.0,653.1 1210.5,654.2 1213.9,655.3 1217.4,656.3 1220.9,657.4 1224.3,658.5 1227.8,659.6 1231.3,660.7 1234.7,661.8 1238.2,662.9 1241.7,663.9 1245.1,665.0 1248.6,666.1 1252.1,667.2 1255.5,668.3 1259.0,669.4 1262.5,670.5 1265.9,671.5 1269.4,672.6 1272.9,673.7 1276.3,674.8 1279.8,675.9 1283.3,677.0 1286.7,678.1 1290.1,679.3 1293.6,680.4 1297.0,681.6 1300.5,682.8 1303.9,683.9 1307.3,685.0 1310.8,686.2 1314.2,687.3 1317.7,688.5 1321.1,689.6 1324.5,690.7 1328.0,691.9 1331.4,693.0 1334.8,694.2 1338.3,695.3 1341.7,696.4 1345.2,697.6 1348.6,698.7 1352.0,699.8 1355.5,701.0 1358.9,702.1 1362.4,703.3 1365.8,704.4 1369.2,705.5 1372.7,706.7 1376.1,707.8 1379.6,708.9 1383.1,709.9 1386.6,711.0 1390.1,712.1 1393.6,713.2 1397.0,714.3 1400.5,715.4 1404.0,716.5 1407.5,717.5 1411.0,718.6 1414.4,719.7 1417.9,720.8 1421.4,721.9 1424.9,723.0 1428.4,724.1 1431.9,725.2 1435.3,726.2 1438.8,727.3 1442.3,728.4 1445.8,729.5 1449.3,730.6 1452.8,731.7 1456.2,732.8 1459.7,733.8 1463.2,734.9 1466.7,736.0 1470.1,737.1 1473.5,738.2 1476.9,739.3 1480.3,740.5 1483.8,741.6 1487.2,742.7 1490.6,743.8 1494.0,744.9 1497.4,746.0 1500.8,747.1 1504.3,748.2 1507.7,749.3 1511.1,750.4 1514.5,751.5 1517.9,752.6 1521.3,753.8 1524.8,754.9 1528.2,756.0 1531.6,757.1 1535.0,758.2 1538.4,759.3 1541.8,760.4 1545.3,761.5 1548.7,762.6 1552.1,763.7 1555.5,764.8 1558.9,765.9 1562.4,767.0 1565.8,768.1 1569.3,769.2 1572.7,770.3 1576.2,771.4 1579.6,772.5 1583.1,773.6 1586.5,774.7 1590.0,775.8 1593.5,776.9 1596.9,778.0 1600.4,779.1 1603.8,780.2 1607.3,781.3 1610.7,782.4 1614.2,783.5 1617.6,784.6 1621.1,785.7 1624.5,786.8 1628.0,787.9 1631.5,789.0 1634.9,790.1 1638.4,791.2 1641.8,792.3 1645.3,793.4 1648.7,794.5 1652.2,795.6 1655.6,796.7 1659.1,797.7 1662.5,798.8 1666.0,799.9 1669.5,801.0 1672.9,802.1 1676.4,803.2 1679.8,804.3 1683.3,805.4 1686.7,806.5 1690.2,807.6 1693.6,808.7 1697.1,809.8 1700.5,810.9 1704.0,812.0 1704.0,815.0 1700.5,813.9 1697.1,812.9 1693.6,811.8 1690.2,810.7 1686.7,809.7 1683.3,808.6 1679.8,807.5 1676.4,806.5 1672.9,805.4 1669.5,804.3 1666.0,803.3 1662.5,802.2 1659.1,801.1 1655.6,800.1 1652.2,799.0 1648.7,797.9 1645.3,796.9 1641.8,795.8 1638.4,794.7 1634.9,793.6 1631.5,792.6 1628.0,791.5 1624.5,790.4 1621.1,789.4 1617.6,788.3 1614.2,787.2 1610.7,786.2 1607.3,785.1 1603.8,784.0 1600.4,783.0 1596.9,781.9 1593.5,780.8 1590.0,779.8 1586.5,778.7 1583.1,777.6 1579.6,776.6 1576.2,775.5 1572.7,774.4 1569.3,773.4 1565.8,772.3 1562.4,771.2 1558.9,770.1 1555.5,768.9 1552.1,767.7 1548.7,766.5 1545.3,765.4 1541.8,764.2 1538.4,763.0 1535.0,761.8 1531.6,760.6 1528.2,759.4 1524.8,758.2 1521.3,757.0 1517.9,755.8 1514.5,754.6 1511.1,753.4 1507.7,752.2 1504.3,751.1 1500.8,749.9 1497.4,748.7 1494.0,747.5 1490.6,746.3 1487.2,745.1 1483.8,743.9 1480.3,742.7 1476.9,741.5 1473.5,740.3 1470.1,739.1 1466.7,737.9 1463.2,736.8 1459.7,735.7 1456.2,734.6 1452.8,733.5 1449.3,732.4 1445.8,731.4 1442.3,730.3 1438.8,729.2 1435.3,728.1 1431.9,727.0 1428.4,725.9 1424.9,724.8 1421.4,723.7 1417.9,722.6 1414.4,721.5 1411.0,720.4 1407.5,719.3 1404.0,718.2 1400.5,717.1 1397.0,716.0 1393.6,714.9 1390.1,713.8 1386.6,712.8 1383.1,711.7 1379.6,710.6 1376.1,709.5 1372.7,708.4 1369.2,707.2 1365.8,706.1 1362.4,704.9 1358.9,703.8 1355.5,702.6 1352.0,701.4 1348.6,700.3 1345.2,699.1 1341.7,698.0 1338.3,696.8 1334.8,695.7 1331.4,694.5 1328.0,693.4 1324.5,692.2 1321.1,691.1 1317.7,689.9 1314.2,688.8 1310.8,687.6 1307.3,686.5 1303.9,685.3 1300.5,684.2 1297.0,683.0 1293.6,681.8 1290.1,680.7 1286.7,679.5 1283.3,678.3 1279.8,677.3 1276.3,676.2 1272.9,675.1 1269.4,674.0 1265.9,672.9 1262.5,671.8 1259.0,670.7 1255.5,669.6 1252.1,668.5 1248.6,667.4 1245.1,666.4 1241.7,665.3 1238.2,664.2 1234.7,663.1 1231.3,662.0 1227.8,660.9 1224.3,659.8 1220.9,658.7 1217.4,657.6 1213.9,656.5 1210.5,655.4 1207.0,654.4 1203.5,653.3 1200.1,652.2 1196.6,651.1 1193.1,650.0 1189.7,648.9 1186.2,647.8 1182.7,646.7 1179.3,645.6 1175.8,644.5 1172.3,643.5 1168.9,642.4 1165.4,641.3 1161.9,640.2 1158.5,639.1 1155.0,638.0" fill="#d8fafa"/>
<polygon points="1155.0,638.0 1158.5,639.1 1161.9,640.2 1165.4,641.3 1168.9,642.4 1172.3,643.5 1175.8,644.5 1179.3,645.6 1182.7,646.7 1186.2,647.8 1189.7,648.9 1193.1,650.0 1196.6,651.1 1200.1,652.2 1203.5,653.3 1207.0,654.4 1210.5,655.4 1213.9,656.5 1217.4,657.6 1220.9,658.7 1224.3,659.8 1227.8,660.9 1231.3,662.0 1234.7,663.1 1238.2,664.2 1241.7,665.3 1245.1,666.4 1248.6,667.4 1252.1,668.5 1255.5,669.6 1259.0,670.7 1262.5,671.8 1265.9,672.9 1269.4,674.0 1272.9,675.1 1276.3,676.2 1279.8,677.3 1283.3,678.3 1286.7,679.5 1290.1,680.7 1293.6,681.8 1297.0,683.0 1300.5,684.2 1303.9,685.3 1307.3,686.5 1310.8,687.6 1314.2,688.8 1317.7,689.9 1321.1,691.1 1324.5,692.2 1328.0,693.4 1331.4,694.5 1334.8,695.7 1338.3,696.8 1341.7,698.0 1345.2,699.1 1348.6,700.3 1352.0,701.4 1355.5,702.6 1358.9,703.8 1362.4,704.9 1365.8,706.1 1369.2,707.2 1372.7,708.4 1376.1,709.5 1379.6,710.6 1383.1,711.7 1386.6,712.8 1390.1,713.8 1393.6,714.9 1397.0,716.0 1400.5,717.1 1404.0,718.2 1407.5,719.3 1411.0,720.4 1414.4,721.5 1417.9,722.6 1421.4,723.7 1424.9,724.8 1428.4,725.9 1431.9,727.0 1435.3,728.1 1438.8,729.2 1442.3,730.3 1445.8,731.4 1449.3,732.4 1452.8,733.5 1456.2,734.6 1459.7,735.7 1463.2,736.8 1466.7,737.9 1470.1,739.1 1473.5,740.3 1476.9,741.5 1480.3,742.7 1483.8,743.9 1487.2,745.1 1490.6,746.3 1494.0,747.5 1497.4,748.7 1500.8,749.9 1504.3,751.1 1507.7,752.2 1511.1,753.4 1514.5,754.6 1517.9,755.8 1521.3,757.0 1524.8,758.2 1528.2,759.4 1531.6,760.6 1535.0,761.8 1538.4,763.0 1541.8,764.2 1545.3,765.4 1548.7,766.5 1552.1,767.7 1555.5,768.9 1558.9,770.1 1562.4,771.2 1565.8,772.3 1569.3,773.4 1572.7,774.4 1576.2,775.5 1579.6,776.6 1583.1,777.6 1586.5,778.7 1590.0,779.8 1593.5,780.8 1596.9,781.9 1600.4,783.0 1603.8,784.0 1607.3,785.1 1610.7,786.2 1614.2,787.2 1617.6,788.3 1621.1,789.4 1624.5,790.4 1628.0,791.5 1631.5,792.6 1634.9,793.6 1638.4,794.7 1641.8,795.8 1645.3,796.9 1648.7,797.9 1652.2,799.0 1655.6,800.1 1659.1,801.1 1662.5,802.2 1666.0,803.3 1669.5,804.3 1672.9,805.4 1676.4,806.5 1679.8,807.5 1683.3,808.6 1686.7,809.7 1690.2,810.7 1693.6,811.8 1697.1,812.9 1700.5,813.9 1704.0,815.0 1704.0,818.5 1700.5,817.4 1697.1,816.4 1693.6,815.3 1690.2,814.2 1686.7,813.2 1683.3,812.1 1679.8,811.0 1676.4,810.0 1672.9,808.9 1669.5,807.8 1666.0,806.8 1662.5,805.7 1659.1,804.6 1655.6,803.6 1652.2,802.5 1648.7,801.4 1645.3,800.4 1641.8,799.3 1638.4,798.2 1634.9,797.1 1631.5,796.1 1628.0,795.0 1624.5,793.9 1621.1,792.9 1617.6,791.8 1614.2,790.7 1610.7,789.7 1607.3,788.6 1603.8,787.5 1600.4,786.5 1596.9,785.4 1593.5,784.3 1590.0,783.3 1586.5,782.2 1583.1,781.1 1579.6,780.1 1576.2,779.0 1572.7,777.9 1569.3,776.9 1565.8,775.8 1562.4,774.7 1558.9,773.6 1555.5,772.4 1552.1,771.2 1548.7,770.0 1545.3,768.8 1541.8,767.6 1538.4,766.4 1535.0,765.2 1531.6,764.0 1528.2,762.8 1524.8,761.6 1521.3,760.3 1517.9,759.1 1514.5,757.9 1511.1,756.7 1507.7,755.5 1504.3,754.3 1500.8,753.1 1497.4,751.9 1494.0,750.7 1490.6,749.5 1487.2,748.3 1483.8,747.1 1480.3,745.9 1476.9,744.7 1473.5,743.5 1470.1,742.2 1466.7,741.0 1463.2,740.0 1459.7,738.9 1456.2,737.9 1452.8,736.8 1449.3,735.8 1445.8,734.8 1442.3,733.7 1438.8,732.7 1435.3,731.6 1431.9,730.6 1428.4,729.6 1424.9,728.5 1421.4,727.5 1417.9,726.4 1414.4,725.4 1411.0,724.4 1407.5,723.3 1404.0,722.3 1400.5,721.2 1397.0,720.2 1393.6,719.2 1390.1,718.1 1386.6,717.1 1383.1,716.0 1379.6,715.0 1376.1,714.0 1372.7,712.9 1369.2,711.7 1365.8,710.6 1362.4,709.5 1358.9,708.4 1355.5,707.2 1352.0,706.1 1348.6,705.0 1345.2,703.8 1341.7,702.7 1338.3,701.6 1334.8,700.5 1331.4,699.3 1328.0,698.2 1324.5,697.1 1321.1,695.9 1317.7,694.8 1314.2,693.7 1310.8,692.6 1307.3,691.4 1303.9,690.3 1300.5,689.2 1297.0,688.0 1293.6,686.8 1290.1,685.7 1286.7,684.5 1283.3,683.3 1279.8,682.3 1276.3,681.2 1272.9,680.1 1269.4,679.0 1265.9,677.9 1262.5,676.8 1259.0,675.7 1255.5,674.6 1252.1,673.5 1248.6,672.4 1245.1,671.4 1241.7,670.3 1238.2,669.2 1234.7,668.1 1231.3,667.0 1227.8,665.9 1224.3,664.8 1220.9,663.7 1217.4,662.6 1213.9,661.5 1210.5,660.4 1207.0,659.4 1203.5,658.3 1200.1,657.2 1196.6,656.1 1193.1,655.0 1189.7,653.9 1186.2,652.8 1182.7,651.7 1179.3,650.6 1175.8,649.5 1172.3,648.5 1168.9,647.4 1165.4,646.3 1161.9,645.2 1158.5,644.1 1155.0,643.0" fill="#f8dc90"/>
<polygon points="1155.0,643.0 1158.5,644.1 1161.9,645.2 1165.4,646.3 1168.9,647.4 1172.3,648.5 1175.8,649.5 1179.3,650.6 1182.7,651.7 1186.2,652.8 1189.7,653.9 1193.1,655.0 1196.6,656.1 1200.1,657.2 1203.5,658.3 1207.0,659.4 1210.5,660.4 1213.9,661.5 1217.4,662.6 1220.9,663.7 1224.3,664.8 1227.8,665.9 1231.3,667.0 1234.7,668.1 1238.2,669.2 1241.7,670.3 1245.1,671.4 1248.6,672.4 1252.1,673.5 1255.5,674.6 1259.0,675.7 1262.5,676.8 1265.9,677.9 1269.4,679.0 1272.9,680.1 1276.3,681.2 1279.8,682.3 1283.3,683.3 1286.7,684.5 1290.1,685.7 1293.6,686.8 1297.0,688.0 1300.5,689.2 1303.9,690.3 1307.3,691.4 1310.8,692.6 1314.2,693.7 1317.7,694.8 1321.1,695.9 1324.5,697.1 1328.0,698.2 1331.4,699.3 1334.8,700.5 1338.3,701.6 1341.7,702.7 1345.2,703.8 1348.6,705.0 1352.0,706.1 1355.5,707.2 1358.9,708.4 1362.4,709.5 1365.8,710.6 1369.2,711.7 1372.7,712.9 1376.1,714.0 1379.6,715.0 1383.1,716.0 1386.6,717.1 1390.1,718.1 1393.6,719.2 1397.0,720.2 1400.5,721.2 1404.0,722.3 1407.5,723.3 1411.0,724.4 1414.4,725.4 1417.9,726.4 1421.4,727.5 1424.9,728.5 1428.4,729.6 1431.9,730.6 1435.3,731.6 1438.8,732.7 1442.3,733.7 1445.8,734.8 1449.3,735.8 1452.8,736.8 1456.2,737.9 1459.7,738.9 1463.2,740.0 1466.7,741.0 1470.1,742.2 1473.5,743.5 1476.9,744.7 1480.3,745.9 1483.8,747.1 1487.2,748.3 1490.6,749.5 1494.0,750.7 1497.4,751.9 1500.8,753.1 1504.3,754.3 1507.7,755.5 1511.1,756.7 1514.5,757.9 1517.9,759.1 1521.3,760.3 1524.8,761.6 1528.2,762.8 1531.6,764.0 1535.0,765.2 1538.4,766.4 1541.8,767.6 1545.3,768.8 1548.7,770.0 1552.1,771.2 1555.5,772.4 1558.9,773.6 1562.4,774.7 1565.8,775.8 1569.3,776.9 1572.7,777.9 1576.2,779.0 1579.6,780.1 1583.1,781.1 1586.5,782.2 1590.0,783.3 1593.5,784.3 1596.9,785.4 1600.4,786.5 1603.8,787.5 1607.3,788.6 1610.7,789.7 1614.2,790.7 1617.6,791.8 1621.1,792.9 1624.5,793.9 1628.0,795.0 1631.5,796.1 1634.9,797.1 1638.4,798.2 1641.8,799.3 1645.3,800.4 1648.7,801.4 1652.2,802.5 1655.6,803.6 1659.1,804.6 1662.5,805.7 1666.0,806.8 1669.5,807.8 1672.9,808.9 1676.4,810.0 1679.8,811.0 1683.3,812.1 1686.7,813.2 1690.2,814.2 1693.6,815.3 1697.1,816.4 1700.5,817.4 1704.0,818.5 1704.0,822.0 1700.5,820.9 1697.1,819.9 1693.6,818.8 1690.2,817.8 1686.7,816.7 1683.3,815.6 1679.8,814.6 1676.4,813.5 1672.9,812.5 1669.5,811.4 1666.0,810.3 1662.5,809.3 1659.1,808.2 1655.6,807.2 1652.2,806.1 1648.7,805.0 1645.3,804.0 1641.8,802.9 1638.4,801.9 1634.9,800.8 1631.5,799.7 1628.0,798.7 1624.5,797.6 1621.1,796.6 1617.6,795.5 1614.2,794.4 1610.7,793.4 1607.3,792.3 1603.8,791.2 1600.4,790.2 1596.9,789.1 1593.5,788.1 1590.0,787.0 1586.5,785.9 1583.1,784.9 1579.6,783.8 1576.2,782.8 1572.7,781.7 1569.3,780.6 1565.8,779.6 1562.4,778.5 1558.9,777.4 1555.5,776.1 1552.1,774.9 1548.7,773.6 1545.3,772.3 1541.8,771.0 1538.4,769.8 1535.0,768.5 1531.6,767.2 1528.2,765.9 1524.8,764.7 1521.3,763.4 1517.9,762.1 1514.5,760.9 1511.1,759.6 1507.7,758.3 1504.3,757.0 1500.8,755.8 1497.4,754.5 1494.0,753.2 1490.6,752.0 1487.2,750.7 1483.8,749.4 1480.3,748.1 1476.9,746.9 1473.5,745.6 1470.1,744.3 1466.7,743.1 1463.2,742.1 1459.7,741.1 1456.2,740.2 1452.8,739.3 1449.3,738.4 1445.8,737.4 1442.3,736.5 1438.8,735.6 1435.3,734.7 1431.9,733.7 1428.4,732.8 1424.9,731.9 1421.4,731.0 1417.9,730.0 1414.4,729.1 1411.0,728.2 1407.5,727.2 1404.0,726.3 1400.5,725.4 1397.0,724.5 1393.6,723.5 1390.1,722.6 1386.6,721.7 1383.1,720.8 1379.6,719.8 1376.1,718.9 1372.7,717.9 1369.2,716.7 1365.8,715.6 1362.4,714.4 1358.9,713.3 1355.5,712.1 1352.0,710.9 1348.6,709.8 1345.2,708.6 1341.7,707.5 1338.3,706.3 1334.8,705.2 1331.4,704.0 1328.0,702.9 1324.5,701.7 1321.1,700.6 1317.7,699.4 1314.2,698.3 1310.8,697.1 1307.3,696.0 1303.9,694.8 1300.5,693.7 1297.0,692.6 1293.6,691.4 1290.1,690.3 1286.7,689.2 1283.3,688.1 1279.8,687.1 1276.3,686.1 1272.9,685.0 1269.4,684.0 1265.9,683.0 1262.5,682.0 1259.0,680.9 1255.5,679.9 1252.1,678.9 1248.6,677.8 1245.1,676.8 1241.7,675.8 1238.2,674.7 1234.7,673.7 1231.3,672.7 1227.8,671.6 1224.3,670.6 1220.9,669.6 1217.4,668.6 1213.9,667.5 1210.5,666.5 1207.0,665.5 1203.5,664.4 1200.1,663.4 1196.6,662.4 1193.1,661.3 1189.7,660.3 1186.2,659.3 1182.7,658.2 1179.3,657.2 1175.8,656.2 1172.3,655.2 1168.9,654.1 1165.4,653.1 1161.9,652.1 1158.5,651.0 1155.0,650.0" fill="#c2c282"/>
<polyline points="1155.0,643.0 1158.5,644.1 1161.9,645.2 1165.4,646.3 1168.9,647.4 1172.3,648.5 1175.8,649.5 1179.3,650.6 1182.7,651.7 1186.2,652.8 1189.7,653.9 1193.1,655.0 1196.6,656.1 1200.1,657.2 1203.5,658.3 1207.0,659.4 1210.5,660.4 1213.9,661.5 1217.4,662.6 1220.9,663.7 1224.3,664.8 1227.8,665.9 1231.3,667.0 1234.7,668.1 1238.2,669.2 1241.7,670.3 1245.1,671.4 1248.6,672.4 1252.1,673.5 1255.5,674.6 1259.0,675.7 1262.5,676.8 1265.9,677.9 1269.4,679.0 1272.9,680.1 1276.3,681.2 1279.8,682.3 1283.3,683.3 1286.7,684.5 1290.1,685.7 1293.6,686.8 1297.0,688.0 1300.5,689.2 1303.9,690.3 1307.3,691.4 1310.8,692.6 1314.2,693.7 1317.7,694.8 1321.1,695.9 1324.5,697.1 1328.0,698.2 1331.4,699.3 1334.8,700.5 1338.3,701.6 1341.7,702.7 1345.2,703.8 1348.6,705.0 1352.0,706.1 1355.5,707.2 1358.9,708.4 1362.4,709.5 1365.8,710.6 1369.2,711.7 1372.7,712.9 1376.1,714.0 1379.6,715.0 1383.1,716.0 1386.6,717.1 1390.1,718.1 1393.6,719.2 1397.0,720.2 1400.5,721.2 1404.0,722.3 1407.5,723.3 1411.0,724.4 1414.4,725.4 1417.9,726.4 1421.4,727.5 1424.9,728.5 1428.4,729.6 1431.9,730.6 1435.3,731.6 1438.8,732.7 1442.3,733.7 1445.8,734.8 1449.3,735.8 1452.8,736.8 1456.2,737.9 1459.7,738.9 1463.2,740.0 1466.7,741.0 1470.1,742.2 1473.5,743.5 1476.9,744.7 1480.3,745.9 1483.8,747.1 1487.2,748.3 1490.6,749.5 1494.0,750.7 1497.4,751.9 1500.8,753.1 1504.3,754.3 1507.7,755.5 1511.1,756.7 1514.5,757.9 1517.9,759.1 1521.3,760.3 1524.8,761.6 1528.2,762.8 1531.6,764.0 1535.0,765.2 1538.4,766.4 1541.8,767.6 1545.3,768.8 1548.7,770.0 1552.1,771.2 1555.5,772.4 1558.9,773.6 1562.4,774.7 1565.8,775.8 1569.3,776.9 1572.7,777.9 1576.2,779.0 1579.6,780.1 1583.1,781.1 1586.5,782.2 1590.0,783.3 1593.5,784.3 1596.9,785.4 1600.4,786.5 1603.8,787.5 1607.3,788.6 1610.7,789.7 1614.2,790.7 1617.6,791.8 1621.1,792.9 1624.5,793.9 1628.0,795.0 1631.5,796.1 1634.9,797.1 1638.4,798.2 1641.8,799.3 1645.3,800.4 1648.7,801.4 1652.2,802.5 1655.6,803.6 1659.1,804.6 1662.5,805.7 1666.0,806.8 1669.5,807.8 1672.9,808.9 1676.4,810.0 1679.8,811.0 1683.3,812.1 1686.7,813.2 1690.2,814.2 1693.6,815.3 1697.1,816.4 1700.5,817.4 1704.0,818.5" fill="none" stroke="#9a8a20" stroke-width="0.7"/>
<polyline points="1155.0,650.0 1158.5,651.0 1161.9,652.1 1165.4,653.1 1168.9,654.1 1172.3,655.2 1175.8,656.2 1179.3,657.2 1182.7,658.2 1186.2,659.3 1189.7,660.3 1193.1,661.3 1196.6,662.4 1200.1,663.4 1203.5,664.4 1207.0,665.5 1210.5,666.5 1213.9,667.5 1217.4,668.6 1220.9,669.6 1224.3,670.6 1227.8,671.6 1231.3,672.7 1234.7,673.7 1238.2,674.7 1241.7,675.8 1245.1,676.8 1248.6,677.8 1252.1,678.9 1255.5,679.9 1259.0,680.9 1262.5,682.0 1265.9,683.0 1269.4,684.0 1272.9,685.0 1276.3,686.1 1279.8,687.1 1283.3,688.1 1286.7,689.2 1290.1,690.3 1293.6,691.4 1297.0,692.6 1300.5,693.7 1303.9,694.8 1307.3,696.0 1310.8,697.1 1314.2,698.3 1317.7,699.4 1321.1,700.6 1324.5,701.7 1328.0,702.9 1331.4,704.0 1334.8,705.2 1338.3,706.3 1341.7,707.5 1345.2,708.6 1348.6,709.8 1352.0,710.9 1355.5,712.1 1358.9,713.3 1362.4,714.4 1365.8,715.6 1369.2,716.7 1372.7,717.9 1376.1,718.9 1379.6,719.8 1383.1,720.8 1386.6,721.7 1390.1,722.6 1393.6,723.5 1397.0,724.5 1400.5,725.4 1404.0,726.3 1407.5,727.2 1411.0,728.2 1414.4,729.1 1417.9,730.0 1421.4,731.0 1424.9,731.9 1428.4,732.8 1431.9,733.7 1435.3,734.7 1438.8,735.6 1442.3,736.5 1445.8,737.4 1449.3,738.4 1452.8,739.3 1456.2,740.2 1459.7,741.1 1463.2,742.1 1466.7,743.1 1470.1,744.3 1473.5,745.6 1476.9,746.9 1480.3,748.1 1483.8,749.4 1487.2,750.7 1490.6,752.0 1494.0,753.2 1497.4,754.5 1500.8,755.8 1504.3,757.0 1507.7,758.3 1511.1,759.6 1514.5,760.9 1517.9,762.1 1521.3,763.4 1524.8,764.7 1528.2,765.9 1531.6,767.2 1535.0,768.5 1538.4,769.8 1541.8,771.0 1545.3,772.3 1548.7,773.6 1552.1,774.9 1555.5,776.1 1558.9,777.4 1562.4,778.5 1565.8,779.6 1569.3,780.6 1572.7,781.7 1576.2,782.8 1579.6,783.8 1583.1,784.9 1586.5,785.9 1590.0,787.0 1593.5,788.1 1596.9,789.1 1600.4,790.2 1603.8,791.2 1607.3,792.3 1610.7,793.4 1614.2,794.4 1617.6,795.5 1621.1,796.6 1624.5,797.6 1628.0,798.7 1631.5,799.7 1634.9,800.8 1638.4,801.9 1641.8,802.9 1645.3,804.0 1648.7,805.0 1652.2,806.1 1655.6,807.2 1659.1,808.2 1662.5,809.3 1666.0,810.3 1669.5,811.4 1672.9,812.5 1676.4,813.5 1679.8,814.6 1683.3,815.6 1686.7,816.7 1690.2,817.8 1693.6,818.8 1697.1,819.9 1700.5,820.9 1704.0,822.0" fill="none" stroke="#a02020" stroke-width="0.9"/>
<polyline points="1155.0,632.0 1285.0,672.0 1374.6,702.0 1466.0,728.5 1560.0,762.0 1704.0,808.0" fill="none" stroke="#a00010" stroke-width="1.1"/>
<polyline points="1158.0,660.0 1702.0,833.0" fill="none" stroke="#b80010" stroke-width="1.1"/>
<defs><clipPath id="rwclip"><polygon points="1852.0,482.0 1704.0,808.0 1702.0,833.0 1850.0,507.0"/></clipPath></defs>
<polygon points="1852.0,482.0 1704.0,808.0 1702.0,833.0 1850.0,507.0" fill="#f2ae8e"/>
<g clip-path="url(#rwclip)">
<polygon points="1857.4,470.0 1689.5,840.0 1690.7,840.0 1858.6,470.0" fill="#a01020"/>
<polygon points="1858.6,470.0 1690.7,840.0 1693.1,840.0 1861.0,470.0" fill="#0a0af0"/>
<polygon points="1861.0,470.0 1693.1,840.0 1693.8,840.0 1861.7,470.0" fill="#6a8a20"/>
<polygon points="1861.7,470.0 1693.8,840.0 1695.3,840.0 1863.2,470.0" fill="#b4b070"/>
<polygon points="1863.2,470.0 1695.3,840.0 1698.9,840.0 1866.8,470.0" fill="#f2ae8e"/>
<polygon points="1866.0,470.0 1698.1,840.0 1699.3,840.0 1867.2,470.0" fill="#a01020"/>
</g>
<line x1="1704" y1="808" x2="1702" y2="833" stroke="#a03010" stroke-width="1"/>
<line x1="1155" y1="632" x2="1158" y2="660" stroke="#008000" stroke-width="1.5"/>
<line x1="1158.5" y1="660" x2="1147" y2="588" stroke="#108a10" stroke-width="1.1"/>
<path d="M1146.3 579.5l-4 11l4 -1.5l4.5 1z" fill="#008a00"/>
<text x="1147" y="570" font-family="Liberation Sans" font-size="10" fill="#008a00" text-anchor="middle">Z</text>
<line x1="1158.5" y1="660" x2="1250" y2="690" stroke="#e00000" stroke-width="1.3"/>
<path d="M1263 694.5l-16 -9.5l1.5 5l-1.5 4z" fill="#f00000"/>
<text x="1277" y="697" font-family="Liberation Sans" font-size="10" fill="#e04040" text-anchor="middle">X</text>
<path d="M1213 588l-8 5l3 1l1 4z" fill="#8080e8"/>
<text x="1222" y="575" font-family="Liberation Sans" font-size="10" fill="#8080e8" text-anchor="middle">Y</text>
<path d="M1843 497l5 3" stroke="#1010f0" stroke-width="1.5"/>
<g>
<line x1="1793" y1="214.8" x2="1809" y2="218.3" stroke="#f06868" stroke-width="1.4"/>
<polygon points="1821,191 1860.7,200.4 1849,222.9 1808.3,213.6" fill="#b6d9b6" stroke="#8a8a8a" stroke-width="0.9"/>
<polygon points="1808.3,213.6 1849,222.9 1844.6,256.9 1804.2,247.7" fill="#c2c2e8" stroke="#8a8a8a" stroke-width="0.9"/>
<polygon points="1849,222.9 1860.7,200.4 1859,226 1844.6,256.9" fill="#c6a6a6" stroke="#8a8a8a" stroke-width="0.9"/>
<line x1="1836.5" y1="190.5" x2="1834" y2="218" stroke="#70c070" stroke-width="1.4" opacity="0.8"/>
<line x1="1830" y1="252" x2="1829" y2="257" stroke="#60b060" stroke-width="1.4"/>
<line x1="1828" y1="229" x2="1820.4" y2="246.5" stroke="#6060f0" stroke-width="1.4" opacity="0.8"/>
<line x1="1808" y1="218" x2="1849" y2="227" stroke="#e89090" stroke-width="1" opacity="0.6"/>
<line x1="1849" y1="227" x2="1872" y2="233.2" stroke="#f06868" stroke-width="1.4"/>
<text x="1825.5" y="239" font-family="Liberation Serif" font-size="10" font-weight="bold" fill="#5a5a5a" text-anchor="middle" transform="rotate(11 1825.5 235)">Front</text>
<text x="1835" y="208" font-family="Liberation Serif" font-size="8" font-weight="bold" fill="#6a7a6a" text-anchor="middle" transform="rotate(14 1835 205)">Top</text>
<text x="1840" y="184" font-family="Liberation Sans" font-size="9.5" fill="#60b060" text-anchor="middle">Z</text>
<text x="1851" y="197" font-family="Liberation Sans" font-size="9.5" fill="#7070f0" text-anchor="middle">Y</text>
<text x="1883" y="236" font-family="Liberation Sans" font-size="9.5" fill="#f06060" text-anchor="middle">X</text>
</g>
</svg>
<!-- /3D VIEW -->
<!-- TABS -->
<div class="a" style="left:308px;top:972px;width:1606px;height:42px;background:#f0f0f0;border-bottom:1px solid #a0a0a0"></div>
<svg class="a" style="left:308px;top:971px" width="1606" height="22" viewBox="308 971 1606 22">
<rect x="308" y="971.5" width="1605" height="1.6" fill="#000"/>
<rect x="308" y="973" width="19" height="17" fill="#ececec"/>
<path d="M326.5 973V990.5H308" fill="none" stroke="#9a9a9a" stroke-width="1.4"/>
<rect x="329" y="973" width="19" height="17" fill="#ececec"/>
<path d="M347.5 973V990.5H329" fill="none" stroke="#9a9a9a" stroke-width="1.4"/>
<rect x="350" y="973" width="19" height="17" fill="#ececec"/>
<path d="M368.5 973V990.5H350" fill="none" stroke="#9a9a9a" stroke-width="1.4"/>
<rect x="371" y="973" width="19" height="17" fill="#ececec"/>
<path d="M389.5 973V990.5H371" fill="none" stroke="#9a9a9a" stroke-width="1.4"/>
<rect x="392" y="973" width="19" height="17" fill="#ececec"/>
<path d="M410.5 973V990.5H392" fill="none" stroke="#9a9a9a" stroke-width="1.4"/>
<path d="M314.5 976.5v9" stroke="#000" stroke-width="1.4"/><path d="M322 976.5v9l-6 -4.5z" fill="#000"/>
<path d="M341 976.5v9l-6 -4.5z" fill="#000"/>
<text x="359.5" y="986" font-family="Liberation Sans" font-weight="bold" font-size="11" text-anchor="middle" fill="#000">#</text>
<path d="M377 976.5v9l6 -4.5z" fill="#a0a0a0"/>
<path d="M398 976.5v9l6 -4.5z" fill="#000"/><path d="M405.5 976.5v9" stroke="#000" stroke-width="1.4"/>
<path d="M413.3 973 L422.0 989.5 L512.3 989.5 L521.0 973Z" fill="#f0f0f0"/>
<path d="M413.3 972.5 L422.0 989.5 L512.3 989.5 L521.0 972.5" fill="none" stroke="#000" stroke-width="1"/>
<path d="M422.5 989.5 L511.8 989.5" stroke="#a0a0a0" stroke-width="1"/>
<path d="M513.5 973 L522.2 989.5 L628.3 989.5 L637.0 973Z" fill="#f0f0f0"/>
<path d="M513.5 972.5 L522.2 989.5 L628.3 989.5 L637.0 972.5" fill="none" stroke="#000" stroke-width="1"/>
<path d="M522.7 989.5 L627.8 989.5" stroke="#a0a0a0" stroke-width="1"/>
<path d="M629.5 973 L638.2 989.5 L752.0 989.5 L760.7 973Z" fill="#f0f0f0"/>
<path d="M629.5 972.5 L638.2 989.5 L752.0 989.5 L760.7 972.5" fill="none" stroke="#000" stroke-width="1"/>
<path d="M638.7 989.5 L751.5 989.5" stroke="#a0a0a0" stroke-width="1"/>
<path d="M753.2 973 L761.9 989.5 L877.0 989.5 L885.7 973Z" fill="#f0f0f0"/>
<path d="M753.2 972.5 L761.9 989.5 L877.0 989.5 L885.7 972.5" fill="none" stroke="#000" stroke-width="1"/>
<path d="M762.4 989.5 L876.5 989.5" stroke="#a0a0a0" stroke-width="1"/>
<path d="M878.2 973 L886.9 989.5 L1080.3 989.5 L1089.0 973Z" fill="#f0f0f0"/>
<path d="M878.2 972.5 L886.9 989.5 L1080.3 989.5 L1089.0 972.5" fill="none" stroke="#000" stroke-width="1"/>
<path d="M887.4 989.5 L1079.8 989.5" stroke="#a0a0a0" stroke-width="1"/>
<path d="M1081.5 973 L1090.2 989.5 L1245.3 989.5 L1254.0 973Z" fill="#f0f0f0"/>
<path d="M1081.5 972.5 L1090.2 989.5 L1245.3 989.5 L1254.0 972.5" fill="none" stroke="#000" stroke-width="1"/>
<path d="M1090.7 989.5 L1244.8 989.5" stroke="#a0a0a0" stroke-width="1"/>
<path d="M1246.5 973 L1255.2 989.5 L1368.1 989.5 L1376.8 973Z" fill="#f0f0f0"/>
<path d="M1246.5 972.5 L1255.2 989.5 L1368.1 989.5 L1376.8 972.5" fill="none" stroke="#000" stroke-width="1"/>
<path d="M1255.7 989.5 L1367.6 989.5" stroke="#a0a0a0" stroke-width="1"/>
<path d="M1369.3 973 L1378.0 989.5 L1492.0 989.5 L1500.7 973Z" fill="#f0f0f0"/>
<path d="M1369.3 972.5 L1378.0 989.5 L1492.0 989.5 L1500.7 972.5" fill="none" stroke="#000" stroke-width="1"/>
<path d="M1378.5 989.5 L1491.5 989.5" stroke="#a0a0a0" stroke-width="1"/>
<path d="M1493.2 973 L1501.9 989.5 L1617.3 989.5 L1626.0 973Z" fill="#ffffff"/>
<path d="M1493.2 972.5 L1501.9 989.5 L1617.3 989.5 L1626.0 972.5" fill="none" stroke="#000" stroke-width="1"/>
<path d="M1502.4 989.5 L1616.8 989.5" stroke="#a0a0a0" stroke-width="1"/>
</svg>
<div class="t" style="left:427.5px;top:976px;font-size:11px;letter-spacing:0.9px;color:#000">Stage 1 = 0 d</div>
<div class="t" style="left:528px;top:976px;font-size:11px;letter-spacing:0.9px;color:#000">Stage 2 = 500 d</div>
<div class="t" style="left:645px;top:976px;font-size:11px;letter-spacing:0.9px;color:#000">Stage 3 = 1000 d</div>
<div class="t" style="left:769.3px;top:976px;font-size:11px;letter-spacing:0.9px;color:#000">Stage 4 = 1500 d</div>
<div class="t" style="left:899.3px;top:976px;font-size:11px;letter-spacing:0.9px;color:#000">Stage 5 -install side = 1600 d</div>
<div class="t" style="left:1100px;top:976px;font-size:11px;letter-spacing:0.9px;color:#000">Stage 6 - slab = 1630 d</div>
<div class="t" style="left:1263px;top:976px;font-size:11px;letter-spacing:0.9px;color:#000">Stage 7 = 1690 d</div>
<div class="t" style="left:1387px;top:976px;font-size:11px;letter-spacing:0.9px;color:#000">Stage 8 = 2000 d</div>
<div class="t" style="left:1506.3px;top:976px;font-size:11px;font-weight:bold;letter-spacing:1.35px;color:#000">Stage 9 = 7000 d</div>
<div class="a" style="left:1758px;top:993px;width:134px;height:20px;background:#fff;border:1px solid #000"></div>
<div class="a" style="left:0;top:1020px;width:1920px;height:20px;background:#fff"></div>
<div class="t" style="left:3px;top:1025px;font-size:12px;letter-spacing:-0.6px;color:#222">Ready</div>
<div class="a" style="left:1530px;top:1022px;width:98px;height:17px;background:#cce4f7"></div>
<div class="t" style="left:1538px;top:1025px;font-size:12px;letter-spacing:-0.45px;color:#111">MAX DATATIPS</div>
<div class="a" style="left:1630px;top:1022px;width:36px;height:17px;background:#cce4f7"></div>
<div class="t" style="left:1633px;top:1025px;font-size:12px;letter-spacing:-0.5px;color:#111">SNAP</div>
<div class="t" style="left:1669px;top:1025px;font-size:12px;letter-spacing:-0.5px;color:#a0a0a0">GRID</div>
<div class="a" style="left:1698px;top:1022px;width:46px;height:17px;background:#cce4f7"></div>
<div class="t" style="left:1700px;top:1025px;font-size:12px;letter-spacing:-0.5px;color:#111">ORTHO</div>
<div class="t" style="left:1747px;top:1025px;font-size:12px;letter-spacing:-0.5px;color:#a0a0a0">OSNAP</div>
<div class="t" style="left:1809px;top:1025px;font-size:12px;letter-spacing:-0.55px;color:#111">-596.600,&nbsp; 322.621</div>
<!-- /TABS -->
</body></html>
